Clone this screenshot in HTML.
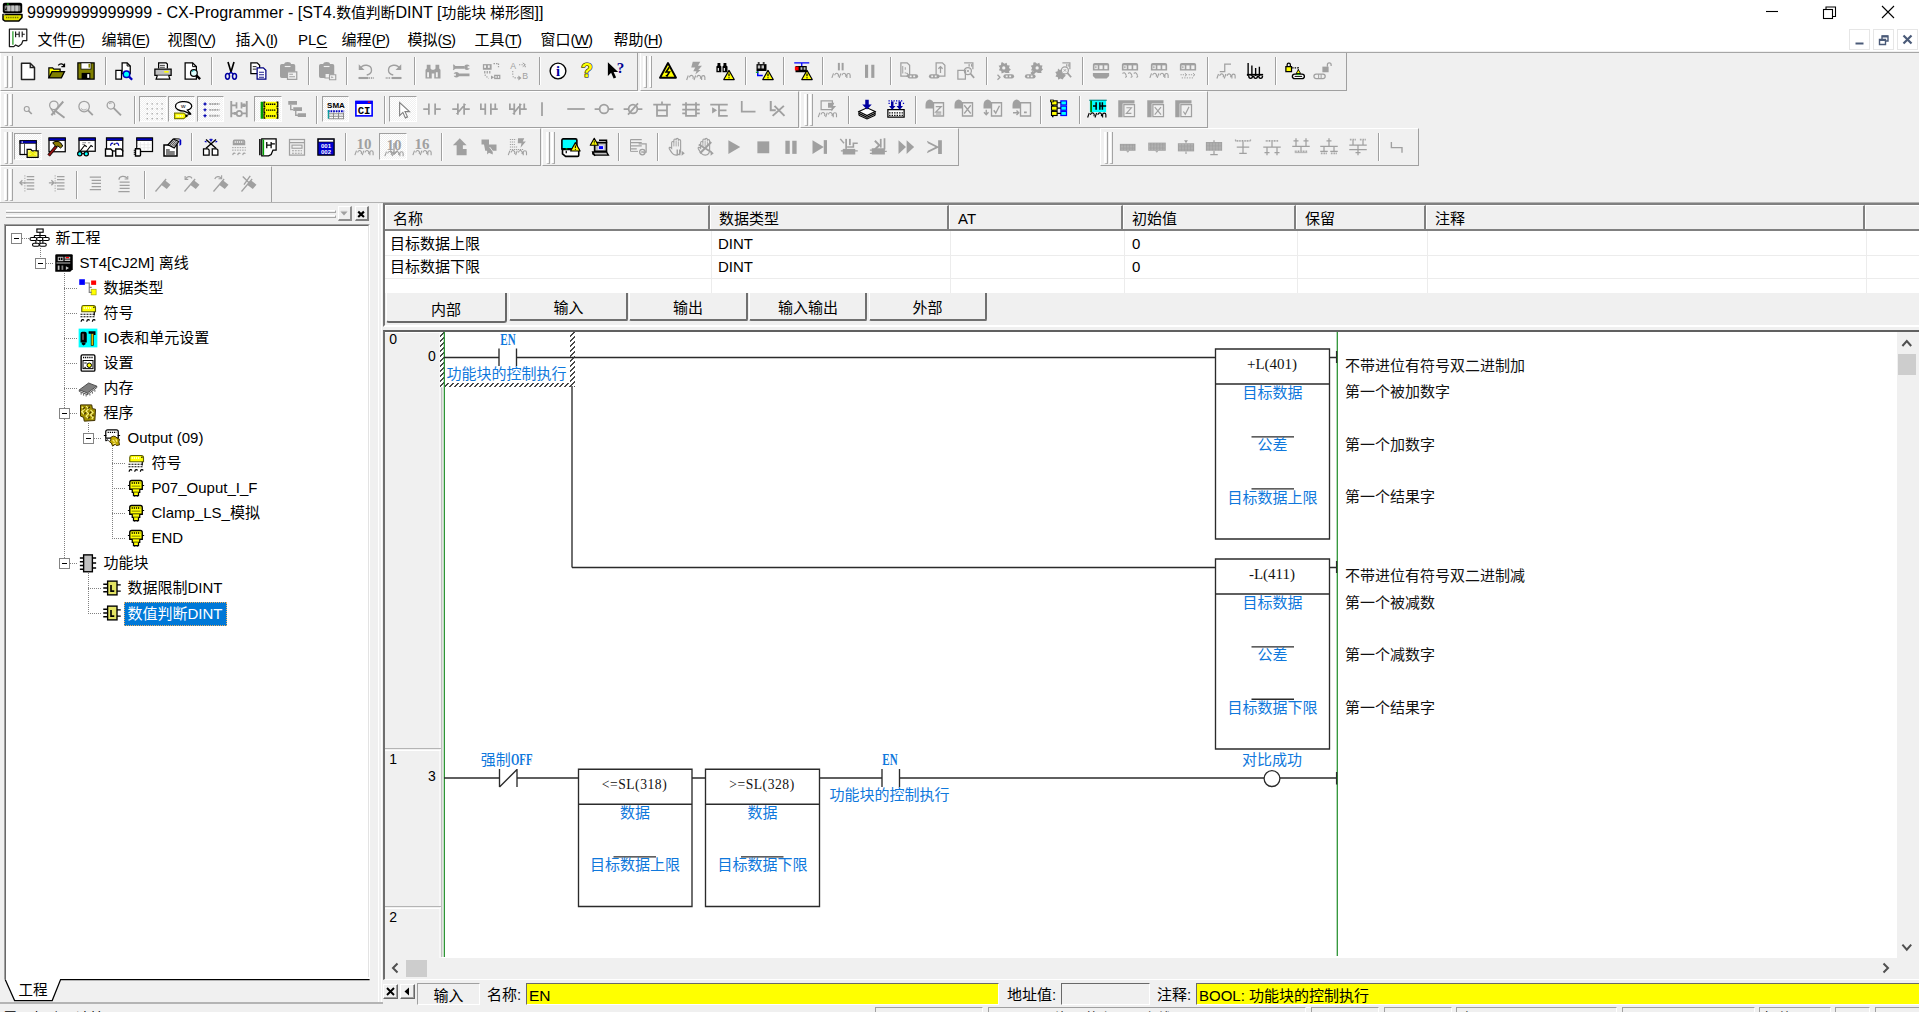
<!DOCTYPE html>
<html lang="zh-CN">
<head>
<meta charset="utf-8">
<title>CX-Programmer</title>
<style>
*{box-sizing:border-box;margin:0;padding:0}
html,body{width:1919px;height:1012px;overflow:hidden;background:#f0f0f0}
body{position:relative;font-family:"Liberation Sans","Noto Sans CJK SC",sans-serif;font-size:15px;color:#000}
div,span{position:absolute;white-space:nowrap}
svg{position:absolute;overflow:visible}
#title{left:0;top:0;width:1919px;height:27px;background:#fff}
#menu{left:0;top:27px;width:1919px;height:25px;background:#fff;border-bottom:1px solid #f0f0f0}
#menu span{top:2.6px;font-size:15px;line-height:20px}
u{text-decoration:underline;text-underline-offset:2px;text-decoration-thickness:1px}
.tb{border-right:1px solid #a0a0a0;border-bottom:1px solid #a0a0a0;border-top:1px solid #fff;border-left:1px solid #fff}
.grip{top:2.8px;width:3.8px;height:32px;border-left:2.2px solid #fff;border-right:1.6px solid #a4a4a4;border-bottom:1px solid #b0b0b0}
.sep{top:4px;width:2px;height:28px;border-left:1px solid #a0a0a0;border-right:1px solid #fff}
.chk{top:4.2px;width:27.6px;height:26.6px;background:#f8f8f8;border:1px solid #fff;border-top-color:#a0a0a0;border-left-color:#a0a0a0;
 background-image:repeating-conic-gradient(#ffffff 0% 25%,#f0f0f0 0% 50%);background-size:2px 2px}
.tree{font-size:15px;line-height:20px}
.tree span{line-height:20px}
.lad{font-family:"Liberation Mono","Noto Sans CJK SC",monospace;font-size:15px;font-weight:400}
.blue{color:#0f78dc}
.ctr{transform:translateX(-50%)}
.mono{font-family:"Liberation Serif",serif;font-size:13.5px;font-weight:400;letter-spacing:0.9px}
</style>
</head>
<body>
<div id="title">
<svg style="left:1.5px;top:1.5px" width="21" height="20" viewBox="0 0 21 20"><rect x="0.8" y="0.8" width="19.4" height="10.4" rx="2" fill="#000"/><rect x="2.6" y="3.6" width="15.8" height="5.6" rx="0.8" fill="#8a8a8a"/><rect x="5.4" y="3.6" width="2.6" height="5.6" fill="#c4c4c4"/><rect x="9.4" y="3.6" width="2.6" height="5.6" fill="#c4c4c4"/><rect x="13.4" y="3.6" width="2.6" height="5.6" fill="#c4c4c4"/><path d="M3 8l1.6 -3.4v3.4z" fill="#000"/><rect x="5.2" y="1.3" width="1.4" height="1.6" fill="#00b000"/><path d="M1 12.4h19v3.2l-3.2 3.4h-14l-1.8 -1.4z" fill="#e6e600" stroke="#000" stroke-width="1.5" stroke-linejoin="round"/><path d="M1.6 13.6l2 -1.2h-2z" fill="#fff"/><path d="M4 15.6h13" stroke="#707000" stroke-width="1.5" stroke-dasharray="1.1 0.7"/></svg>
<span style="left:27px;top:2px;font-size:16.08px;line-height:20px">99999999999999 - CX-Programmer - [ST4.<span style="position:static;font-size:14.8px">数值判断</span>DINT [<span style="position:static;font-size:14.8px">功能块 梯形图</span>]]</span>
<svg style="left:1740px;top:0" width="179" height="27" viewBox="0 0 179 27" fill="none" stroke="#000" stroke-width="1.1"><path d="M26 11.5h12"/><rect x="83.5" y="9.5" width="9" height="9"/><path d="M86 9.5v-2.5h9.5v9.5h-3"/><path d="M142 6l12 12M154 6l-12 12"/></svg>
</div>
<div id="menu">
<svg style="left:8px;top:1px" width="21" height="21" viewBox="0 0 21 21" fill="none" stroke="#1a1a1a" stroke-width="1.25"><path d="M1.4 1.2h17.4v11.4h-3.8l-1.4 3.4l-3.2 2.4l-2.8 -1.4l-1.8 1.6h-4.4z" fill="#fff" stroke-linejoin="round"/><path d="M4.9 3.2v13.6" stroke="#3aa63a" stroke-width="1.4"/><path d="M7.6 3.6v5.6M7.6 6.2h3.6M11.2 3.6v5.6M14.2 3.6v5.6M14.2 6.2h2.6" stroke-width="1.15"/></svg>
<span style="left:37.4px">文件<span style="position:static;letter-spacing:-0.75px">(<u>F</u>)</span></span>
<span style="left:101.4px">编辑<span style="position:static;letter-spacing:-0.75px">(<u>E</u>)</span></span>
<span style="left:167.4px">视图<span style="position:static;letter-spacing:-0.75px">(<u>V</u>)</span></span>
<span style="left:235.4px">插入<span style="position:static;letter-spacing:-0.75px">(<u>I</u>)</span></span>
<span style="left:298px">PL<u>C</u></span>
<span style="left:341.4px">编程<span style="position:static;letter-spacing:-0.75px">(<u>P</u>)</span></span>
<span style="left:407.4px">模拟<span style="position:static;letter-spacing:-0.75px">(<u>S</u>)</span></span>
<span style="left:474.4px">工具<span style="position:static;letter-spacing:-0.75px">(<u>T</u>)</span></span>
<span style="left:540.4px">窗口<span style="position:static;letter-spacing:-0.75px">(<u>W</u>)</span></span>
<span style="left:613.4px">帮助<span style="position:static;letter-spacing:-0.75px">(<u>H</u>)</span></span>
<svg style="left:1849px;top:2px" width="70" height="24" viewBox="0 0 70 24"><rect x="0.5" y="0.5" width="20" height="20" fill="#fff" stroke="#e6e6e6"/><rect x="24.5" y="0.5" width="20" height="20" fill="#fff" stroke="#e6e6e6"/><rect x="48.5" y="0.5" width="20" height="20" fill="#fff" stroke="#e6e6e6"/><path d="M6.5 14.5h8" stroke="#4a5a78" stroke-width="2"/><path d="M30.5 10.5h6v5h-6zM33 10v-3h6v5h-2.5" fill="none" stroke="#4a5a78" stroke-width="1.4"/><path d="M30.5 11h6M33 7.5h6" stroke="#4a5a78" stroke-width="2"/><path d="M54.5 6.5l8 8M62.5 6.5l-8 8" stroke="#4a5a78" stroke-width="2.2"/></svg>
</div>
<!-- TOOLBARS -->
<div class="tb" style="left:0.0px;top:52.0px;width:638.0px;height:38.5px">
<div class="grip" style="left:2.8px"></div><div class="grip" style="left:8px"></div>
<svg style="left:17.0px;top:7.9px" width="20" height="20" viewBox="0 0 16 16"><path d="M2.8 1.8h7l3.4 3.4v9.6h-10.4z" fill="#fff" stroke="#202020" stroke-width="1.2" stroke-linejoin="round"/><path d="M9.8 1.8v3.4h3.4" fill="none" stroke="#202020" stroke-width="1.1"/></svg>
<svg style="left:45.7px;top:7.9px" width="20" height="20" viewBox="0 0 16 16"><path d="M1.5 13.5v-8h3l1 1h5v2" fill="#ffff00" stroke="#000" stroke-width="1"/><path d="M1.5 13.5l2.5 -5h10l-2.5 5z" fill="#808000" stroke="#000" stroke-width="1"/><path d="M9 3.5c1.5 -2 4 -1.5 4.5 0.5M14 2v2.5h-2.5" fill="none" stroke="#000" stroke-width="1"/></svg>
<svg style="left:74.5px;top:7.9px" width="20" height="20" viewBox="0 0 16 16"><rect x="1.5" y="1.5" width="13" height="13" fill="#808000" stroke="#000" stroke-width="1"/><rect x="4" y="1.5" width="8" height="5" fill="#fff" stroke="#000" stroke-width="0.6"/><rect x="4.5" y="9.5" width="7" height="5" fill="#000"/><rect x="9" y="10.5" width="1.6" height="3" fill="#fff"/><rect x="10" y="2.3" width="1.3" height="3" fill="#808000"/></svg>
<div class="sep" style="left:104.1px"></div>
<svg style="left:113.2px;top:7.9px" width="20" height="20" viewBox="0 0 16 16"><path d="M1.5 7.5h4.5v7h-4.5z" fill="#fff" stroke="#000" stroke-width="1"/><path d="M6.5 1.5h4l2.5 2.5v6h-6.5z" fill="#fff" stroke="#000" stroke-width="1"/><path d="M10.5 1.5v2.5h2.5" fill="none" stroke="#000" stroke-width="0.8"/><circle cx="10" cy="10.5" r="2.6" fill="#00ffff" stroke="#0000c0" stroke-width="1.2"/><path d="M12 12.5l2.5 2.5" fill="none" stroke="#0000c0" stroke-width="1.8"/></svg>
<div class="sep" style="left:142.9px"></div>
<svg style="left:152.0px;top:7.9px" width="20" height="20" viewBox="0 0 16 16"><path d="M4.5 6v-4.5h6l1 1v3.5" fill="#fff" stroke="#000" stroke-width="1"/><path d="M1.5 6.5h13v5h-13z" fill="#c0c0c0" stroke="#000" stroke-width="1"/><path d="M3.5 11.5l-1 3h11l-1 -3" fill="#fff" stroke="#000" stroke-width="1"/><rect x="9" y="8" width="3.5" height="1.3" fill="#ffff00"/><path d="M5.5 3.5h4M5.5 5h4" fill="none" stroke="#000" stroke-width="0.6"/></svg>
<svg style="left:180.7px;top:7.9px" width="20" height="20" viewBox="0 0 16 16"><path d="M2.5 1.5h6l3 3v10h-9z" fill="#fff" stroke="#000" stroke-width="1"/><path d="M8.5 1.5v3h3" fill="none" stroke="#000" stroke-width="0.8"/><circle cx="9.5" cy="9.5" r="2.7" fill="#e0ffff" stroke="#000" stroke-width="1"/><path d="M11.5 11.5l3 3" fill="none" stroke="#000" stroke-width="1.8"/><path d="M8 8.5a2 2 0 0 1 2 -0.8" fill="none" stroke="#00a0a0" stroke-width="0.8"/></svg>
<div class="sep" style="left:210.4px"></div>
<svg style="left:219.5px;top:7.9px" width="20" height="20" viewBox="0 0 16 16"><path d="M5.6 0.8l2.6 8.6M10.4 0.8l-2.6 8.6" fill="none" stroke="#000" stroke-width="1.3"/><ellipse cx="5.2" cy="12.2" rx="1.6" ry="2.3" fill="none" stroke="#0000a0" stroke-width="1.2"/><ellipse cx="10.8" cy="12.2" rx="1.6" ry="2.3" fill="none" stroke="#0000a0" stroke-width="1.2"/><path d="M8 9l-1.8 1.4M8 9l1.8 1.4" fill="none" stroke="#0000a0" stroke-width="1.2"/></svg>
<svg style="left:248.2px;top:7.9px" width="20" height="20" viewBox="0 0 16 16"><path d="M1.5 1.5h5l2 2v6.5h-7z" fill="#fff" stroke="#000" stroke-width="1"/><path d="M3 4.5h3M3 6.5h3" fill="none" stroke="#000" stroke-width="0.7"/><path d="M6.5 5.5h5l2 2v7h-7z" fill="#fff" stroke="#000080" stroke-width="1"/><path d="M8 9h4M8 11h4M8 13h4" fill="none" stroke="#000080" stroke-width="0.7"/></svg>
<svg style="left:277.0px;top:7.9px" width="20" height="20" viewBox="0 0 16 16"><path d="M1.6 3.8a1.4 1.4 0 0 1 1.4 -1.4h9.4a1.4 1.4 0 0 1 1.4 1.4v8.4a1.4 1.4 0 0 1 -1.4 1.4h-9.4a1.4 1.4 0 0 1 -1.4 -1.4z" fill="#a0a0a0"/><path d="M5 2.4a2.6 1.6 0 0 1 5.4 0z" fill="#a0a0a0"/><path d="M5.4 4.4h4.6" fill="none" stroke="#f0f0f0" stroke-width="0.9"/><path d="M7.6 8.6h7.4v6h-7.4z" fill="#f0f0f0" stroke="#a0a0a0" stroke-width="1"/><path d="M9 10.6h3M9 12.6h4.6" fill="none" stroke="#a0a0a0" stroke-width="0.9"/></svg>
<div class="sep" style="left:306.7px"></div>
<svg style="left:315.7px;top:7.9px" width="20" height="20" viewBox="0 0 16 16"><path d="M1.6 3.8a1.4 1.4 0 0 1 1.4 -1.4h9.4a1.4 1.4 0 0 1 1.4 1.4v8.4a1.4 1.4 0 0 1 -1.4 1.4h-9.4a1.4 1.4 0 0 1 -1.4 -1.4z" fill="#a0a0a0"/><path d="M5 2.4a2.6 1.6 0 0 1 5.4 0z" fill="#a0a0a0"/><path d="M5.4 4.4h4.6" fill="none" stroke="#f0f0f0" stroke-width="0.9"/><path d="M6.4 10h4v3.6h-4z" fill="#f0f0f0" stroke="#a0a0a0" stroke-width="0.9"/><path d="M10 11h5v4h-5z" fill="#f0f0f0" stroke="#a0a0a0" stroke-width="0.9"/><path d="M11.4 12.2l2 0.8l-2 0.8z" fill="#a0a0a0"/></svg>
<div class="sep" style="left:345.4px"></div>
<svg style="left:354.5px;top:7.9px" width="20" height="20" viewBox="0 0 16 16"><path d="M3.4 6.2c2 -4.4 9 -3.4 9 1.2c0 2.2 -2 3.4 -3.8 3.8" fill="none" stroke="#a0a0a0" stroke-width="1.1"/><path d="M2.2 2.6v4.6h4.6z" fill="#a0a0a0"/><path d="M2 13.6h8" fill="none" stroke="#a0a0a0" stroke-width="1.7"/><path d="M10.6 13.6h4" fill="none" stroke="#a0a0a0" stroke-width="1.5" stroke-dasharray="0.7 0.7"/></svg>
<svg style="left:383.2px;top:7.9px" width="20" height="20" viewBox="0 0 16 16"><path d="M12.6 6.2c-2 -4.4 -9 -3.4 -9 1.2c0 2.2 2 3.4 3.8 3.8" fill="none" stroke="#a0a0a0" stroke-width="1.1"/><path d="M13.8 2.6v4.6h-4.6z" fill="#a0a0a0"/><path d="M6 13.6h8" fill="none" stroke="#a0a0a0" stroke-width="1.7"/><path d="M1.4 13.6h4" fill="none" stroke="#a0a0a0" stroke-width="1.5" stroke-dasharray="0.7 0.7"/></svg>
<div class="sep" style="left:412.9px"></div>
<svg style="left:422.0px;top:7.9px" width="20" height="20" viewBox="0 0 16 16"><path d="M3 3h3v3l1 1v7h-5v-7l1 -1zM10 3h3v3l1 1v7h-5v-7l1 -1z" fill="#a0a0a0"/><rect x="6.5" y="7" width="3" height="3" fill="#a0a0a0"/><rect x="3.3" y="9" width="1.5" height="4" fill="#f0f0f0"/><rect x="10.3" y="9" width="1.5" height="4" fill="#f0f0f0"/></svg>
<svg style="left:450.7px;top:7.9px" width="20" height="20" viewBox="0 0 16 16"><path d="M1 5h9M5 11h9" fill="none" stroke="#a0a0a0" stroke-width="2.2"/><circle cx="12" cy="5" r="2.2" fill="#a0a0a0"/><circle cx="3.5" cy="11" r="2.2" fill="#a0a0a0"/><rect x="12.5" y="4.2" width="3" height="1.6" fill="#f0f0f0"/><rect x="0.5" y="10.2" width="2.6" height="1.6" fill="#f0f0f0"/><path d="M1 3l2 2l-2 2" fill="none" stroke="#a0a0a0" stroke-width="1"/></svg>
<svg style="left:479.5px;top:7.9px" width="20" height="20" viewBox="0 0 16 16"><path d="M1.5 2.5h7v4.5h-7z" fill="#a0a0a0"/><path d="M3 8v2M5 8v2M7 8v2" fill="none" stroke="#a0a0a0" stroke-width="1"/><rect x="2.5" y="3.5" width="1.5" height="2" fill="#f0f0f0"/><rect x="5.5" y="3.5" width="1.5" height="2" fill="#f0f0f0"/><path d="M10 2h4v3" fill="none" stroke="#a0a0a0" stroke-width="1" stroke-dasharray="1.2 0.8"/><path d="M3 11l3 3" fill="none" stroke="#a0a0a0" stroke-width="1" stroke-dasharray="1 1"/><path d="M8 11.5l2.5 1.5l-2.5 1.5z" fill="#a0a0a0"/><rect x="10.5" y="11" width="5" height="3.5" fill="#a0a0a0"/><rect x="11.5" y="12" width="1" height="1.5" fill="#f0f0f0"/><rect x="13.5" y="12" width="1" height="1.5" fill="#f0f0f0"/></svg>
<svg style="left:508.2px;top:7.9px" width="20" height="20" viewBox="0 0 16 16"><text x="1" y="6.5" font-size="7" fill="#a0a0a0" font-weight="normal" font-family="Liberation Sans,sans-serif" text-anchor="start">A</text><text x="10.5" y="14.5" font-size="7" fill="#a0a0a0" font-weight="normal" font-family="Liberation Sans,sans-serif" text-anchor="start">B</text><path d="M3 8v3c0 2 1 2.5 3 2.5h2" fill="none" stroke="#a0a0a0" stroke-width="0.9" stroke-dasharray="1 1"/><path d="M7.5 11.5l2.5 2l-2.5 2z" fill="#a0a0a0"/><path d="M8 3h5v3" fill="none" stroke="#a0a0a0" stroke-width="0.9" stroke-dasharray="1 1"/><path d="M11 1.5l2 1.5l-2 1.5" fill="none" stroke="#a0a0a0" stroke-width="0.8"/></svg>
<div class="sep" style="left:537.9px"></div>
<svg style="left:547.0px;top:7.9px" width="20" height="20" viewBox="0 0 16 16"><circle cx="8" cy="8" r="6.3" fill="#fff" stroke="#000" stroke-width="1.1"/><text x="8" y="12.2" font-size="11.5" fill="#0000a0" font-weight="bold" font-family="Liberation Serif,sans-serif" text-anchor="middle">i</text></svg>
<svg style="left:575.7px;top:7.9px" width="20" height="20" viewBox="0 0 16 16"><text x="8" y="12.6" font-size="15.5" fill="#ffff00" font-weight="bold" font-family="Liberation Sans,sans-serif" text-anchor="middle" stroke="#000" stroke-width="0.9" paint-order="stroke">?</text></svg>
<svg style="left:604.5px;top:7.9px" width="20" height="20" viewBox="0 0 16 16"><path d="M1.5 1l0 11l2.6 -2.6l2 4.6l2 -0.9l-2 -4.4h3.6z" fill="#000"/><text x="11.5" y="9.5" font-size="12" fill="#000090" font-weight="bold" font-family="Liberation Serif,sans-serif" text-anchor="middle">?</text></svg>
</div>
<div class="tb" style="left:639.5px;top:52.0px;width:707.0px;height:38.5px">
<div class="grip" style="left:2.8px"></div><div class="grip" style="left:8px"></div>
<svg style="left:17.0px;top:7.9px" width="20" height="20" viewBox="0 0 16 16"><path d="M8 1.6l6.4 11.8h-12.8z" fill="#ffff00" stroke="#000" stroke-width="1.5" stroke-linejoin="round"/><path d="M9 5l-2.6 3.8h2.8l-2.2 3.4" fill="none" stroke="#000" stroke-width="1.2"/><path d="M5.8 11.6l1.6 1.2l0.4 -2z" fill="#000"/></svg>
<svg style="left:45.7px;top:7.9px" width="20" height="20" viewBox="0 0 16 16"><path d="M5.4 0.6h6l-1.8 3.2h3.2l-3 3.4h2l-4.4 3.6l1 -2.6h-2.6l1.6 -3h-3.2z" fill="#a0a0a0"/><path d="M0.5 15.2l1.3 -3.6M2.8 13.1a1.5 1.6 0 1 1 2.6 1.1M6.4 15.2l1.3 -3.6M8.7 13.1a1.5 1.6 0 1 1 2.6 1.1M12.5 15.2v-2.2a1.3 1.3 0 0 1 2.6 0v2.2" fill="none" stroke="#a0a0a0" stroke-width="0.9"/></svg>
<svg style="left:74.5px;top:7.9px" width="20" height="20" viewBox="0 0 16 16"><path d="M2 1.5h2.3v2l0.8 0.8v4.7h-4v-4.7l0.9 -0.8zM6.8 1.5h2.3v2l0.9 0.8v4.7h-4v-4.7l0.8 -0.8z" fill="#000"/><rect x="2.2" y="5.6" width="0.9" height="2.3" fill="#fff"/><rect x="7" y="5.6" width="0.9" height="2.3" fill="#fff"/><path d="M11.2 7.5L15.4 14.850000000000001L7 14.850000000000001Z" fill="#ffff00" stroke="#000" stroke-width="0.9" stroke-linejoin="round"/><path d="M11.2 10.0725v2.205" fill="none" stroke="#000" stroke-width="0.9450000000000001"/><rect x="10.7275" y="13.0125" width="0.9450000000000001" height="0.8400000000000001" fill="#000"/></svg>
<div class="sep" style="left:104.1px"></div>
<svg style="left:113.2px;top:7.9px" width="20" height="20" viewBox="0 0 16 16"><rect x="2" y="2.5" width="8" height="5.5" fill="#000"/><rect x="3" y="3.5" width="2" height="2.5" fill="#c0c0c0"/><rect x="6" y="3.5" width="2" height="2.5" fill="#c0c0c0"/><path d="M3 1.5h1.5M7 1.5h1.5" fill="none" stroke="#000" stroke-width="1.2"/><path d="M3 8v3.5h4" fill="none" stroke="#0000ff" stroke-width="1.2"/><path d="M1.5 9h2" fill="none" stroke="#00a000" stroke-width="1"/><path d="M11.2 7.5L15.4 14.850000000000001L7 14.850000000000001Z" fill="#ffff00" stroke="#000" stroke-width="0.9" stroke-linejoin="round"/><path d="M11.2 10.0725v2.205" fill="none" stroke="#000" stroke-width="0.9450000000000001"/><rect x="10.7275" y="13.0125" width="0.9450000000000001" height="0.8400000000000001" fill="#000"/></svg>
<div class="sep" style="left:142.9px"></div>
<svg style="left:152.0px;top:7.9px" width="20" height="20" viewBox="0 0 16 16"><path d="M1 1.5h12" fill="none" stroke="#0000ff" stroke-width="1"/><rect x="2" y="4" width="9" height="5" fill="#000"/><rect x="1.5" y="4.5" width="3" height="3" fill="#ff0000"/><rect x="6" y="5" width="1.5" height="2" fill="#c0c0c0"/><rect x="8.5" y="5" width="1.5" height="2" fill="#c0c0c0"/><path d="M7 1.5v2.5" fill="none" stroke="#0000ff" stroke-width="1"/><path d="M11.2 7.5L15.4 14.850000000000001L7 14.850000000000001Z" fill="#ffff00" stroke="#000" stroke-width="0.9" stroke-linejoin="round"/><path d="M11.2 10.0725v2.205" fill="none" stroke="#000" stroke-width="0.9450000000000001"/><rect x="10.7275" y="13.0125" width="0.9450000000000001" height="0.8400000000000001" fill="#000"/></svg>
<div class="sep" style="left:181.7px"></div>
<svg style="left:190.7px;top:7.9px" width="20" height="20" viewBox="0 0 16 16"><rect x="5.5" y="1.5" width="1.6" height="6" fill="#a0a0a0"/><rect x="8.5" y="1.5" width="1.6" height="6" fill="#a0a0a0"/><path d="M0.7000000000000002 13.5l1.3 -3.6M3.0 11.4a1.5 1.6 0 1 1 2.6 1.1M6.6000000000000005 13.5l1.3 -3.6M8.899999999999999 11.4a1.5 1.6 0 1 1 2.6 1.1M12.7 13.5v-2.2a1.3 1.3 0 0 1 2.6 0v2.2" fill="none" stroke="#a0a0a0" stroke-width="0.9"/></svg>
<svg style="left:219.5px;top:7.9px" width="20" height="20" viewBox="0 0 16 16"><rect x="4" y="3" width="2.5" height="10.5" fill="#a0a0a0"/><rect x="9" y="3" width="2.5" height="10.5" fill="#a0a0a0"/></svg>
<div class="sep" style="left:249.2px"></div>
<svg style="left:258.2px;top:7.9px" width="20" height="20" viewBox="0 0 16 16"><path d="M1.5 1.5h5l2 2v8.5h-7z" fill="none" stroke="#a0a0a0" stroke-width="1"/><path d="M3 4v6M5 5v2M5 9v1" fill="none" stroke="#a0a0a0" stroke-width="0.8"/><path d="M6 9.5l1.5 1.5l-1.5 1.5" fill="none" stroke="#a0a0a0" stroke-width="1"/><path d="M8.5 10.5h5a1.7 1.7 0 0 1 0 3.5h-5a1.7 1.7 0 0 1 0 -3.5z" fill="#a0a0a0"/><rect x="8.6" y="11.6" width="1.5" height="1.4" fill="#f0f0f0"/><rect x="11.4" y="11.6" width="1.5" height="1.4" fill="#f0f0f0"/></svg>
<svg style="left:287.0px;top:7.9px" width="20" height="20" viewBox="0 0 16 16"><path d="M6.5 1.5h5l2 2v8.5h-7z" fill="none" stroke="#a0a0a0" stroke-width="1"/><path d="M10 9.5v-5M8.3 6.2l1.7 -1.7l1.7 1.7" fill="none" stroke="#a0a0a0" stroke-width="1"/><path d="M2.5 10.5h5a1.7 1.7 0 0 1 0 3.5h-5a1.7 1.7 0 0 1 0 -3.5z" fill="#a0a0a0"/><rect x="2.6" y="11.6" width="1.5" height="1.4" fill="#f0f0f0"/><rect x="5.4" y="11.6" width="1.5" height="1.4" fill="#f0f0f0"/></svg>
<svg style="left:315.7px;top:7.9px" width="20" height="20" viewBox="0 0 16 16"><path d="M1.5 7.5h6v7h-6z" fill="none" stroke="#a0a0a0" stroke-width="1"/><path d="M6.5 1.5h7v5" fill="none" stroke="#a0a0a0" stroke-width="1"/><rect x="10" y="2.5" width="1" height="2" fill="#a0a0a0"/><rect x="12" y="2.5" width="1" height="2" fill="#a0a0a0"/><circle cx="9.5" cy="8" r="2.8" fill="none" stroke="#a0a0a0" stroke-width="1"/><path d="M11.5 10l3 3.5" fill="none" stroke="#a0a0a0" stroke-width="1.4"/><path d="M8.5 7l2 2M10.5 7l-2 2" fill="none" stroke="#a0a0a0" stroke-width="0.7"/></svg>
<div class="sep" style="left:345.4px"></div>
<svg style="left:354.5px;top:7.9px" width="20" height="20" viewBox="0 0 16 16"><path d="M6 1l1.5 1.2l1.8 -0.8l0.5 1.9l2 0.3l-0.6 1.9l1.5 1.3l-1.5 1.3l0.4 1.4h-3l-1 -0.5l-2.3 0.9l-0.3 -2l-1.9 -0.6l0.9 -1.8l-1.1 -1.7l1.9 -0.7l0.2 -2z" fill="#a0a0a0"/><circle cx="7" cy="5.5" r="1.3" fill="#f0f0f0"/><path d="M2 11l2 2l-2 2" fill="none" stroke="#a0a0a0" stroke-width="1"/><path d="M8.5 10.5h5a1.7 1.7 0 0 1 0 3.5h-5a1.7 1.7 0 0 1 0 -3.5z" fill="#a0a0a0"/><rect x="8.6" y="11.6" width="1.5" height="1.4" fill="#f0f0f0"/><rect x="11.4" y="11.6" width="1.5" height="1.4" fill="#f0f0f0"/></svg>
<svg style="left:383.2px;top:7.9px" width="20" height="20" viewBox="0 0 16 16"><path d="M9 1l1.5 1.2l1.8 -0.8l0.5 1.9l2 0.3l-0.6 1.9l1 1.3l-1.5 1.3l0.4 1.4h-3l-1 -0.5l-2.3 0.9l-0.3 -2l-1.9 -0.6l0.9 -1.8l-1.1 -1.7l1.9 -0.7l0.2 -2z" fill="#a0a0a0"/><circle cx="10.5" cy="5.5" r="1.3" fill="#f0f0f0"/><path d="M7 12v-3.5M5.5 10l1.5 -1.5l1.5 1.5" fill="none" stroke="#a0a0a0" stroke-width="1"/><path d="M2.5 10.5h5a1.7 1.7 0 0 1 0 3.5h-5a1.7 1.7 0 0 1 0 -3.5z" fill="#a0a0a0"/><rect x="2.6" y="11.6" width="1.5" height="1.4" fill="#f0f0f0"/><rect x="5.4" y="11.6" width="1.5" height="1.4" fill="#f0f0f0"/></svg>
<svg style="left:412.0px;top:7.9px" width="20" height="20" viewBox="0 0 16 16"><path d="M4 6l1.5 1.2l1.8 -0.8l0.5 1.9l2 0.3l-0.6 1.9l1 1.3l-1.5 1.3l-1 1.6l-1.8 -0.7l-1.7 0.9l-0.3 -2l-1.9 -0.6l0.9 -1.8l-1.1 -1.7l1.9 -0.7z" fill="#a0a0a0"/><path d="M7.5 1.5h6v5" fill="none" stroke="#a0a0a0" stroke-width="1"/><rect x="10.5" y="2.5" width="1" height="2" fill="#a0a0a0"/><rect x="12.2" y="2.5" width="1" height="2" fill="#a0a0a0"/><circle cx="9.5" cy="7.5" r="2.8" fill="#f0f0f0" stroke="#a0a0a0" stroke-width="1"/><path d="M11.5 9.5l3 3.5" fill="none" stroke="#a0a0a0" stroke-width="1.4"/><path d="M8.5 6.5l2 2M10.5 6.5l-2 2" fill="none" stroke="#a0a0a0" stroke-width="0.7"/></svg>
<div class="sep" style="left:441.7px"></div>
<svg style="left:450.7px;top:7.9px" width="20" height="20" viewBox="0 0 16 16"><path d="M1.5 3a1.5 1.5 0 0 1 1.5 -1.5h10a1.5 1.5 0 0 1 1.5 1.5v4.5h-13z" fill="#a0a0a0"/><rect x="2.8" y="3.5" width="2.6" height="3" fill="#f0f0f0"/><rect x="6.7" y="3.5" width="2.6" height="3" fill="#f0f0f0"/><rect x="10.6" y="3.5" width="2.6" height="3" fill="#f0f0f0"/><rect x="3.4" y="4.2" width="1" height="1.6" fill="#a0a0a0"/><path d="M1.5 9.5h13v2.5l-2 2h-9l-2 -2z" fill="#a0a0a0"/></svg>
<svg style="left:479.5px;top:7.9px" width="20" height="20" viewBox="0 0 16 16"><path d="M1.5 3a1.5 1.5 0 0 1 1.5 -1.5h10a1.5 1.5 0 0 1 1.5 1.5v4.5h-13z" fill="#a0a0a0"/><rect x="2.8" y="3.5" width="2.6" height="3" fill="#f0f0f0"/><rect x="6.7" y="3.5" width="2.6" height="3" fill="#f0f0f0"/><rect x="10.6" y="3.5" width="2.6" height="3" fill="#f0f0f0"/><rect x="3.4" y="4.2" width="1" height="1.6" fill="#a0a0a0"/><path d="M2 10c1 -1 2 -1 3 1.5M6.5 10c1 -1 2 -1 3 1.5M11 10c1 -1 2 -1 3 1.5" fill="none" stroke="#a0a0a0" stroke-width="0.9"/><path d="M4 13l1.2 -0.2l-0.3 -1.3M8.5 13l1.2 -0.2l-0.3 -1.3M13 13l1.2 -0.2l-0.3 -1.3" fill="none" stroke="#a0a0a0" stroke-width="0.8"/></svg>
<svg style="left:508.2px;top:7.9px" width="20" height="20" viewBox="0 0 16 16"><path d="M1.5 3a1.5 1.5 0 0 1 1.5 -1.5h10a1.5 1.5 0 0 1 1.5 1.5v4.5h-13z" fill="#a0a0a0"/><rect x="2.8" y="3.5" width="2.6" height="3" fill="#f0f0f0"/><rect x="6.7" y="3.5" width="2.6" height="3" fill="#f0f0f0"/><rect x="10.6" y="3.5" width="2.6" height="3" fill="#f0f0f0"/><rect x="3.4" y="4.2" width="1" height="1.6" fill="#a0a0a0"/><path d="M0.7000000000000002 13.5l1.3 -3.6M3.0 11.4a1.5 1.6 0 1 1 2.6 1.1M6.6000000000000005 13.5l1.3 -3.6M8.899999999999999 11.4a1.5 1.6 0 1 1 2.6 1.1M12.7 13.5v-2.2a1.3 1.3 0 0 1 2.6 0v2.2" fill="none" stroke="#a0a0a0" stroke-width="0.9"/></svg>
<svg style="left:537.0px;top:7.9px" width="20" height="20" viewBox="0 0 16 16"><path d="M1.5 3a1.5 1.5 0 0 1 1.5 -1.5h10a1.5 1.5 0 0 1 1.5 1.5v4.5h-13z" fill="#a0a0a0"/><rect x="2.8" y="3.5" width="2.6" height="3" fill="#f0f0f0"/><rect x="6.7" y="3.5" width="2.6" height="3" fill="#f0f0f0"/><rect x="10.6" y="3.5" width="2.6" height="3" fill="#f0f0f0"/><rect x="3.4" y="4.2" width="1" height="1.6" fill="#a0a0a0"/><path d="M2 11h4M8.5 11h3" fill="none" stroke="#a0a0a0" stroke-width="0.9" stroke-dasharray="1 0.8"/><path d="M5.5 9.8l1.5 1.2l-1.5 1.2M12 9.8l1.5 1.2l-1.5 1.2" fill="none" stroke="#a0a0a0" stroke-width="0.8"/><path d="M3 13.5h9" fill="none" stroke="#a0a0a0" stroke-width="0.8" stroke-dasharray="1 1"/></svg>
<div class="sep" style="left:566.6px"></div>
<svg style="left:575.7px;top:7.9px" width="20" height="20" viewBox="0 0 16 16"><path d="M3 8.5h4v-6h5" fill="none" stroke="#a0a0a0" stroke-width="1"/><path d="M0.7000000000000002 14l1.3 -3.6M3.0 11.9a1.5 1.6 0 1 1 2.6 1.1M6.6000000000000005 14l1.3 -3.6M8.899999999999999 11.9a1.5 1.6 0 1 1 2.6 1.1M12.7 14v-2.2a1.3 1.3 0 0 1 2.6 0v2.2" fill="none" stroke="#a0a0a0" stroke-width="0.9"/></svg>
<svg style="left:604.5px;top:7.9px" width="20" height="20" viewBox="0 0 16 16"><path d="M2.5 1.5v10.5M5.5 3.5v8.5M8.5 5.5v6.5M11.5 4.5v7.5" fill="none" stroke="#000" stroke-width="1.1"/><path d="M1.5 11h13" fill="none" stroke="#000" stroke-width="1.4"/><path d="M3 12c0 2.5 3 2.5 3 0M7 12c0 2.5 3 2.5 3 0M11 12c0 2.5 3 2.5 3 0" fill="none" stroke="#000" stroke-width="1.1"/></svg>
<div class="sep" style="left:634.1px"></div>
<svg style="left:643.2px;top:7.9px" width="20" height="20" viewBox="0 0 16 16"><rect x="1.5" y="4.5" width="4.5" height="4" fill="#ffff00" stroke="#000" stroke-width="1"/><path d="M2.5 4.5v-1.5a1.3 1.3 0 0 1 2.6 0v1.5" fill="none" stroke="#000" stroke-width="1"/><path d="M6.5 5.5h5v3" fill="none" stroke="#000" stroke-width="1" stroke-dasharray="1.2 0.8"/><path d="M11.5 7l1.8 3h-3.6z" fill="#ffff00" stroke="#000" stroke-width="0.7"/><path d="M8.5 10.5h6a1.8 1.8 0 0 1 0 3.6h-6a1.8 1.8 0 0 1 0 -3.6z" fill="#fff" stroke="#000" stroke-width="1.1"/><path d="M8.5 12.3h6" fill="none" stroke="#000" stroke-width="0.8"/><rect x="10.7" y="10.3" width="1.6" height="1" fill="#00c000"/></svg>
<svg style="left:672.0px;top:7.9px" width="20" height="20" viewBox="0 0 16 16"><rect x="7.5" y="4.5" width="5" height="4.5" fill="#a0a0a0"/><path d="M11.5 4.5v-1.5a1.5 1.5 0 0 1 3 0v1" fill="none" stroke="#a0a0a0" stroke-width="1"/><path d="M2.5 10.5h5.5a1.7 1.7 0 0 1 0 3.5h-5.5a1.7 1.7 0 0 1 0 -3.5z" fill="none" stroke="#a0a0a0" stroke-width="1"/><path d="M4.5 10.5v3.5M6.5 10.5v3.5" fill="none" stroke="#a0a0a0" stroke-width="0.8"/></svg>
</div>
<div class="tb" style="left:0.0px;top:90.5px;width:798.5px;height:37.5px">
<div class="grip" style="left:2.8px"></div><div class="grip" style="left:8px"></div>
<svg style="left:17.0px;top:7.9px" width="20" height="20" viewBox="0 0 16 16"><circle cx="7" cy="8" r="2" fill="none" stroke="#a0a0a0" stroke-width="0.9"/><path d="M8.4 9.4l2.6 2.6" fill="none" stroke="#a0a0a0" stroke-width="1.4"/></svg>
<svg style="left:45.7px;top:7.9px" width="20" height="20" viewBox="0 0 16 16"><circle cx="5.5" cy="5" r="3.4" fill="none" stroke="#a0a0a0" stroke-width="1"/><path d="M7.88 7.38l0 0" fill="none" stroke="#a0a0a0" stroke-width="1.5"/><path d="M13 2l-9.5 11M6 9l8 6" fill="none" stroke="#a0a0a0" stroke-width="1.6"/><path d="M3 7.5l3.5 5" fill="none" stroke="#a0a0a0" stroke-width="1.1"/></svg>
<svg style="left:74.5px;top:7.9px" width="20" height="20" viewBox="0 0 16 16"><circle cx="6.5" cy="6" r="4.2" fill="none" stroke="#a0a0a0" stroke-width="1"/><path d="M9.44 8.94l4 4" fill="none" stroke="#a0a0a0" stroke-width="1.5"/><path d="M4 7.5a3 3 0 0 0 4.5 0.5" fill="none" stroke="#a0a0a0" stroke-width="0.7"/></svg>
<svg style="left:103.2px;top:7.9px" width="20" height="20" viewBox="0 0 16 16"><circle cx="5.5" cy="5" r="3" fill="none" stroke="#a0a0a0" stroke-width="1"/><path d="M7.6 7.1l6 6" fill="none" stroke="#a0a0a0" stroke-width="1.5"/><path d="M4 4a1.6 1.6 0 0 1 2 -0.6" fill="none" stroke="#a0a0a0" stroke-width="0.7"/></svg>
<div class="sep" style="left:132.9px"></div>
<div class="chk" style="left:138.2px"></div>
<svg style="left:142.8px;top:8.7px" width="20" height="20" viewBox="0 0 16 16"><rect x="2.1" y="2.6" width="1.0" height="1.0" fill="#9a9a9a"/><rect x="2.1" y="6.550000000000001" width="1.0" height="1.0" fill="#9a9a9a"/><rect x="2.1" y="10.5" width="1.0" height="1.0" fill="#9a9a9a"/><rect x="2.1" y="14.450000000000001" width="1.0" height="1.0" fill="#9a9a9a"/><rect x="6.050000000000001" y="2.6" width="1.0" height="1.0" fill="#9a9a9a"/><rect x="6.050000000000001" y="6.550000000000001" width="1.0" height="1.0" fill="#9a9a9a"/><rect x="6.050000000000001" y="10.5" width="1.0" height="1.0" fill="#9a9a9a"/><rect x="6.050000000000001" y="14.450000000000001" width="1.0" height="1.0" fill="#9a9a9a"/><rect x="10.0" y="2.6" width="1.0" height="1.0" fill="#9a9a9a"/><rect x="10.0" y="6.550000000000001" width="1.0" height="1.0" fill="#9a9a9a"/><rect x="10.0" y="10.5" width="1.0" height="1.0" fill="#9a9a9a"/><rect x="10.0" y="14.450000000000001" width="1.0" height="1.0" fill="#9a9a9a"/><rect x="13.950000000000001" y="2.6" width="1.0" height="1.0" fill="#9a9a9a"/><rect x="13.950000000000001" y="6.550000000000001" width="1.0" height="1.0" fill="#9a9a9a"/><rect x="13.950000000000001" y="10.5" width="1.0" height="1.0" fill="#9a9a9a"/><rect x="13.950000000000001" y="14.450000000000001" width="1.0" height="1.0" fill="#9a9a9a"/></svg>
<div class="chk" style="left:166.9px"></div>
<svg style="left:171.5px;top:8.7px" width="20" height="20" viewBox="0 0 16 16"><path d="M2 5a6.5 3.6 0 1 1 9.5 3.1l3 3.4l-5.6 -2.6a7 3.6 0 0 1 -6.9 -3.9z" fill="#fff" stroke="#000" stroke-width="1"/><text x="8.3" y="6.6" font-size="5" fill="#000" font-weight="normal" font-family="Liberation Sans,sans-serif" text-anchor="middle">w</text><path d="M1.3 10.5h7.2l2.8 2.2l-2.8 2.2h-7.2z" fill="#ffff00" stroke="#808000" stroke-width="1"/><path d="M2.8 12.7h5" fill="none" stroke="#fff" stroke-width="1.2" stroke-dasharray="0.9 0.5"/><circle cx="10.6" cy="12.7" r="0.9" fill="#000"/><path d="M11 12.2c1.8 -0.2 2.6 -1 2.8 -2" fill="none" stroke="#000" stroke-width="0.9"/></svg>
<div class="chk" style="left:195.7px"></div>
<svg style="left:200.3px;top:8.7px" width="20" height="20" viewBox="0 0 16 16"><path d="M3.2 1.4l0.55 1.2l1.2 0.55l-1.2 0.55l-0.55 1.2l-0.55 -1.2l-1.2 -0.55l1.2 -0.55z" fill="#0000b0"/><path d="M3.2 6.1l0.55 1.2l1.2 0.55l-1.2 0.55l-0.55 1.2l-0.55 -1.2l-1.2 -0.55l1.2 -0.55z" fill="#0000b0"/><path d="M3.2 10.8l0.55 1.2l1.2 0.55l-1.2 0.55l-0.55 1.2l-0.55 -1.2l-1.2 -0.55l1.2 -0.55z" fill="#0000b0"/><path d="M6.6 3.2h8.2" fill="none" stroke="#a8a8a8" stroke-width="1.5" stroke-dasharray="1.5 0.45"/><path d="M6.6 7.9h8.2" fill="none" stroke="#a8a8a8" stroke-width="1.5" stroke-dasharray="1.5 0.45"/><path d="M6.6 12.600000000000001h8.2" fill="none" stroke="#a8a8a8" stroke-width="1.5" stroke-dasharray="1.5 0.45"/></svg>
<svg style="left:228.2px;top:7.9px" width="20" height="20" viewBox="0 0 16 16"><path d="M1.8 1.5v13M14.2 1.5v13" fill="none" stroke="#a0a0a0" stroke-width="1.5"/><path d="M1.8 5h4.2M10 5h4.2M6 2.5v5M10 2.5v5" fill="none" stroke="#a0a0a0" stroke-width="1.4"/><rect x="10.6" y="3.6" width="2.6" height="2.8" fill="#a0a0a0"/><path d="M1.8 11.5h4M10.5 11.5h3.7" fill="none" stroke="#a0a0a0" stroke-width="1.4"/><rect x="3.8" y="10.4" width="2.2" height="2.2" fill="#a0a0a0"/><circle cx="8.2" cy="11.5" r="2.1" fill="none" stroke="#a0a0a0" stroke-width="1.4"/></svg>
<div class="chk" style="left:253.2px"></div>
<svg style="left:257.8px;top:8.7px" width="20" height="20" viewBox="0 0 16 16"><rect x="1.3" y="1.4" width="1.9" height="13.6" fill="#00a000"/><rect x="3.6" y="1.4" width="11.8" height="13.6" fill="#ffff00"/><path d="M5.6 3.4h7.8" fill="none" stroke="#000" stroke-width="1.1" stroke-dasharray="1.1 0.5"/><path d="M5.6 8.1h7.8" fill="none" stroke="#000" stroke-width="1.1" stroke-dasharray="1.1 0.5"/><path d="M5.6 12.8h7.8" fill="none" stroke="#000" stroke-width="1.1" stroke-dasharray="1.1 0.5"/><path d="M5 1.7h-1v3.4h1M14 1.7h1v3.4h-1" fill="none" stroke="#000" stroke-width="1"/><path d="M5 6.4h-1v3.4h1M14 6.4h1v3.4h-1" fill="none" stroke="#000" stroke-width="1"/><path d="M5 11.1h-1v3.4h1M14 11.1h1v3.4h-1" fill="none" stroke="#000" stroke-width="1"/></svg>
<svg style="left:285.7px;top:7.9px" width="20" height="20" viewBox="0 0 16 16"><rect x="1" y="1.6" width="7" height="3" fill="#a0a0a0"/><rect x="5" y="6.6" width="7" height="3" fill="#a0a0a0"/><rect x="8.6" y="11.4" width="6.6" height="3" fill="#a0a0a0"/><path d="M3 4.5v4h2M7 9.5v3.5h2" fill="none" stroke="#a0a0a0" stroke-width="1.1"/></svg>
<div class="sep" style="left:315.4px"></div>
<div class="chk" style="left:320.7px"></div>
<svg style="left:325.3px;top:8.7px" width="20" height="20" viewBox="0 0 16 16"><text x="8" y="6.6" font-size="6.4" fill="#000" font-weight="bold" font-family="Liberation Sans,sans-serif" text-anchor="middle">SMA</text><path d="M1.5 9h13" fill="none" stroke="#0000c0" stroke-width="1.6" stroke-dasharray="1.4 0.7"/><path d="M2 8v7" fill="none" stroke="#00a0a0" stroke-width="1.2"/><path d="M2 11h12.5M2 13h12.5M2 15h12.5M6 10v5M10 10v5M14 10v5" fill="none" stroke="#808080" stroke-width="0.7"/></svg>
<svg style="left:353.2px;top:7.9px" width="20" height="20" viewBox="0 0 16 16"><rect x="1.5" y="2" width="13" height="11.5" fill="#fff" stroke="#0000ff" stroke-width="1.3"/><rect x="1.5" y="1.5" width="13" height="2.5" fill="#0000ff"/><rect x="11" y="2" width="2" height="1" fill="#ff0000"/><text x="8" y="11.6" font-size="8.5" fill="#000" font-weight="bold" font-family="Liberation Mono,sans-serif" text-anchor="middle">CI</text></svg>
<div class="sep" style="left:382.9px"></div>
<div class="chk" style="left:388.2px"></div>
<svg style="left:392.8px;top:8.7px" width="20" height="20" viewBox="0 0 16 16"><path d="M4.5 2v10.5l2.6 -2.6l2 4.4l1.7 -0.8l-2 -4.2h3.6z" fill="#fff" stroke="#808080" stroke-width="0.9"/></svg>
<svg style="left:420.7px;top:7.9px" width="20" height="20" viewBox="0 0 16 16"><path d="M1 8h4.5M10.5 8h4.5M5.5 3.5v9M10.5 3.5v9" fill="none" stroke="#a0a0a0" stroke-width="1.4"/></svg>
<svg style="left:449.5px;top:7.9px" width="20" height="20" viewBox="0 0 16 16"><path d="M1 8h4.5M10.5 8h4.5M5.5 3.5v9M10.5 3.5v9M4.5 12l7 -8" fill="none" stroke="#a0a0a0" stroke-width="1.4"/></svg>
<svg style="left:478.2px;top:7.9px" width="20" height="20" viewBox="0 0 16 16"><path d="M1.5 3.5v4.5h3.5M5 3.5v9M9.5 3.5v9M9.5 8h3.5v-4.5M13 8h2" fill="none" stroke="#a0a0a0" stroke-width="1.4"/></svg>
<svg style="left:507.0px;top:7.9px" width="20" height="20" viewBox="0 0 16 16"><path d="M1.5 3.5v4.5h3.5M5 3.5v9M9.5 3.5v9M9.5 8h3.5v-4.5M13 8h2M4 12l6.5 -8" fill="none" stroke="#a0a0a0" stroke-width="1.4"/></svg>
<svg style="left:535.7px;top:7.9px" width="20" height="20" viewBox="0 0 16 16"><path d="M4 2.5v11" fill="none" stroke="#a0a0a0" stroke-width="1.4"/></svg>
<svg style="left:564.5px;top:7.9px" width="20" height="20" viewBox="0 0 16 16"><path d="M1 8h14" fill="none" stroke="#a0a0a0" stroke-width="1.4"/></svg>
<svg style="left:593.2px;top:7.9px" width="20" height="20" viewBox="0 0 16 16"><path d="M0.5 8h4M11.5 8h4" fill="none" stroke="#a0a0a0" stroke-width="1.4"/><circle cx="8" cy="8" r="3.5" fill="none" stroke="#a0a0a0" stroke-width="1.4"/></svg>
<svg style="left:622.0px;top:7.9px" width="20" height="20" viewBox="0 0 16 16"><path d="M0.5 8h4M11.5 8h4M4 12.5l8 -9" fill="none" stroke="#a0a0a0" stroke-width="1.4"/><circle cx="8" cy="8" r="3.5" fill="none" stroke="#a0a0a0" stroke-width="1.4"/></svg>
<svg style="left:650.7px;top:7.9px" width="20" height="20" viewBox="0 0 16 16"><path d="M1 4.5h14M4 4.5v9h8v-9M4 9h8" fill="none" stroke="#a0a0a0" stroke-width="1.4"/><path d="M8 2v2.5" fill="none" stroke="#a0a0a0" stroke-width="1.4"/></svg>
<svg style="left:679.5px;top:7.9px" width="20" height="20" viewBox="0 0 16 16"><path d="M1 4.5h14M4 2.5v11h8v-11M1 8.5h14M4 13.5h8M1 11.5h3M12 11.5h3" fill="none" stroke="#a0a0a0" stroke-width="1.4"/></svg>
<svg style="left:708.2px;top:7.9px" width="20" height="20" viewBox="0 0 16 16"><path d="M1 4.5h5M6 4.5h9M8 4.5v9h7M8 9h6" fill="none" stroke="#a0a0a0" stroke-width="1.4"/><path d="M2.5 6.5l4 2.5l-4 2.5z" fill="#a0a0a0"/></svg>
<svg style="left:737.0px;top:7.9px" width="20" height="20" viewBox="0 0 16 16"><path d="M3 1.5v8.5h11" fill="none" stroke="#a0a0a0" stroke-width="1.4"/></svg>
<svg style="left:765.7px;top:7.9px" width="20" height="20" viewBox="0 0 16 16"><path d="M3 1.5v7.5h4M4.5 13.5l9 -8M6 5.5l8 8" fill="none" stroke="#a0a0a0" stroke-width="1.5999999999999999"/></svg>
</div>
<div class="tb" style="left:800.0px;top:90.5px;width:408.0px;height:37.5px">
<div class="grip" style="left:2.8px"></div><div class="grip" style="left:8px"></div>
<svg style="left:17.0px;top:7.9px" width="20" height="20" viewBox="0 0 16 16"><path d="M2.5 1.5h9v7h-9z" fill="none" stroke="#a0a0a0" stroke-width="1"/><path d="M8 3h5l-1 2.5h2.5l-4 4.5l0.5 -3h-3z" fill="#a0a0a0"/><path d="M0.20000000000000018 14.5l1.3 -3.6M2.5 12.4a1.5 1.6 0 1 1 2.6 1.1M6.1000000000000005 14.5l1.3 -3.6M8.399999999999999 12.4a1.5 1.6 0 1 1 2.6 1.1M12.2 14.5v-2.2a1.3 1.3 0 0 1 2.6 0v2.2" fill="none" stroke="#a0a0a0" stroke-width="0.9"/></svg>
<div class="sep" style="left:46.6px"></div>
<svg style="left:55.7px;top:7.9px" width="20" height="20" viewBox="0 0 16 16"><path d="M1.5 10l6.5 -3l6.5 3l-6.5 3.2z" fill="#fff" stroke="#000" stroke-width="0.9"/><path d="M1.5 11.5l6.5 3.2l6.5 -3.2M1.5 13l6.5 3l6.5 -3" fill="none" stroke="#000" stroke-width="0.9"/><path d="M1.5 10v3M14.5 10v3" fill="none" stroke="#000" stroke-width="0.8"/><path d="M6.6 0.6h2.8v3.7h2.4l-3.8 4l-3.8 -4h2.4z" fill="#0000a0"/></svg>
<svg style="left:84.5px;top:7.9px" width="20" height="20" viewBox="0 0 16 16"><rect x="1.5" y="8.5" width="13" height="6" fill="#fff" stroke="#000" stroke-width="1"/><path d="M2.5 11h11M2.5 13h11" fill="none" stroke="#000" stroke-width="1" stroke-dasharray="1.1 0.9"/><path d="M4 2v3.5h-1.6l2.6 3l2.6 -3h-1.6v-3.5zM10 2v3.5h-1.6l2.6 3l2.6 -3h-1.6v-3.5z" fill="#0000a0"/><path d="M2 1.5h12" fill="none" stroke="#0000c0" stroke-width="0.9" stroke-dasharray="1 1"/><path d="M2 3.5h1M7.5 3.5h1M13.5 3.5h1" fill="none" stroke="#0000c0" stroke-width="0.9"/></svg>
<div class="sep" style="left:114.1px"></div>
<svg style="left:123.2px;top:7.9px" width="20" height="20" viewBox="0 0 16 16"><path d="M1.2 7.6v-2.8a3.3 4.4 0 0 1 6.6 0v2.8z" fill="#a0a0a0"/><path d="M3.6 0.9h1.8v1h-1.8z" fill="#a0a0a0"/><path d="M7.6 3h8v10.6h-8z" fill="#f0f0f0" stroke="#a0a0a0" stroke-width="1.1"/><path d="M9.4 6h4.4l-4.4 4.4h4.4" fill="none" stroke="#a0a0a0" stroke-width="1"/><path d="M9.4 12h4.4" fill="none" stroke="#a0a0a0" stroke-width="0.9"/></svg>
<svg style="left:152.0px;top:7.9px" width="20" height="20" viewBox="0 0 16 16"><path d="M1.2 7.6v-2.8a3.3 4.4 0 0 1 6.6 0v2.8z" fill="#a0a0a0"/><path d="M3.6 0.9h1.8v1h-1.8z" fill="#a0a0a0"/><path d="M7.6 3h8v10.6h-8z" fill="#f0f0f0" stroke="#a0a0a0" stroke-width="1.1"/><path d="M9 5l5.2 6.6M14.2 5l-5.2 6.6" fill="none" stroke="#a0a0a0" stroke-width="1"/></svg>
<svg style="left:180.7px;top:7.9px" width="20" height="20" viewBox="0 0 16 16"><path d="M1.2 7.6v-2.8a3.3 4.4 0 0 1 6.6 0v2.8z" fill="#a0a0a0"/><path d="M3.6 0.9h1.8v1h-1.8z" fill="#a0a0a0"/><path d="M7.6 3h8v10.6h-8z" fill="#f0f0f0" stroke="#a0a0a0" stroke-width="1.1"/><path d="M9.4 9l1.6 2.4l3 -6" fill="none" stroke="#a0a0a0" stroke-width="1.1"/><path d="M3.4 8.6v3.6M1.6 10.6l1.8 2l1.8 -2" fill="none" stroke="#a0a0a0" stroke-width="1.1"/></svg>
<svg style="left:209.5px;top:7.9px" width="20" height="20" viewBox="0 0 16 16"><path d="M1.2 7.6v-2.8a3.3 4.4 0 0 1 6.6 0v2.8z" fill="#a0a0a0"/><path d="M3.6 0.9h1.8v1h-1.8z" fill="#a0a0a0"/><path d="M7.6 3h8v10.6h-8z" fill="#f0f0f0" stroke="#a0a0a0" stroke-width="1.1"/><rect x="10.4" y="10" width="2.2" height="1.4" fill="#a0a0a0"/><path d="M1.6 11h4.4M4.4 9.2l1.8 1.8l-1.8 1.8" fill="none" stroke="#a0a0a0" stroke-width="1.1"/></svg>
<div class="sep" style="left:239.2px"></div>
<svg style="left:248.2px;top:7.9px" width="20" height="20" viewBox="0 0 16 16"><path d="M3 1.5v13" fill="none" stroke="#000" stroke-width="1.2"/><rect x="2" y="1.5" width="4.5" height="3.3" fill="#ffff00" stroke="#000" stroke-width="0.9"/><rect x="2" y="5.7" width="4.5" height="3.3" fill="#ffff00" stroke="#000" stroke-width="0.9"/><rect x="2" y="9.9" width="4.5" height="3.3" fill="#ffff00" stroke="#000" stroke-width="0.9"/><rect x="1.2" y="0.8" width="2.4" height="1.5" fill="#ffff00" stroke="#000" stroke-width="0.6"/><rect x="9.5" y="1.5" width="4.5" height="3.3" fill="#00ffff" stroke="#0000ff" stroke-width="1"/><rect x="9.5" y="5.7" width="4.5" height="3.3" fill="#00ffff" stroke="#0000ff" stroke-width="1"/><rect x="9.5" y="9.9" width="4.5" height="3.3" fill="#00ffff" stroke="#0000ff" stroke-width="1"/><path d="M6.5 3h3M6.5 7.3h3M6.5 11.5h3" fill="none" stroke="#000" stroke-width="0.9"/></svg>
<div class="sep" style="left:277.9px"></div>
<svg style="left:287.0px;top:7.9px" width="20" height="20" viewBox="0 0 16 16"><rect x="1.5" y="1" width="13" height="9.5" fill="#00ffff"/><path d="M2.5 1v9.5" fill="none" stroke="#008000" stroke-width="1.4"/><path d="M4 5.5h2.5M9.5 5.5h5M6.5 2.5v6M9.5 2.5v6M11.5 2.5v6" fill="none" stroke="#000" stroke-width="1.2"/><path d="M1 1h14" fill="none" stroke="#008080" stroke-width="0.9"/><path d="M-0.2999999999999998 14.8l1.3 -3.6M2.0 12.700000000000001a1.5 1.6 0 1 1 2.6 1.1M5.6000000000000005 14.8l1.3 -3.6M7.8999999999999995 12.700000000000001a1.5 1.6 0 1 1 2.6 1.1M11.7 14.8v-2.2a1.3 1.3 0 0 1 2.6 0v2.2" fill="none" stroke="#000" stroke-width="0.9"/></svg>
<svg style="left:315.7px;top:7.9px" width="20" height="20" viewBox="0 0 16 16"><path d="M1 1h13v2.5h-9.5v11h-3.5z" fill="#a0a0a0"/><path d="M5.5 4.5h8.5v9.5h-8.5z" fill="#f0f0f0" stroke="#a0a0a0" stroke-width="1"/><path d="M7.5 7h4l-4 4.5h4" fill="none" stroke="#a0a0a0" stroke-width="0.9"/></svg>
<svg style="left:344.5px;top:7.9px" width="20" height="20" viewBox="0 0 16 16"><path d="M1 1h13v2.5h-9.5v11h-3.5z" fill="#a0a0a0"/><path d="M5.5 4.5h8.5v9.5h-8.5z" fill="#f0f0f0" stroke="#a0a0a0" stroke-width="1"/><path d="M7 6.5l5 6M12 6.5l-5 6" fill="none" stroke="#a0a0a0" stroke-width="0.9"/></svg>
<svg style="left:373.2px;top:7.9px" width="20" height="20" viewBox="0 0 16 16"><path d="M1 1h13v2.5h-9.5v11h-3.5z" fill="#a0a0a0"/><path d="M5.5 4.5h8.5v9.5h-8.5z" fill="#f0f0f0" stroke="#a0a0a0" stroke-width="1"/><path d="M7.5 10l1.5 2.3l3 -6" fill="none" stroke="#a0a0a0" stroke-width="0.9"/></svg>
</div>
<div class="tb" style="left:0.0px;top:128.0px;width:541.0px;height:37.5px">
<div class="grip" style="left:2.8px"></div><div class="grip" style="left:8px"></div>
<div class="chk" style="left:13.2px"></div>
<svg style="left:17.8px;top:8.7px" width="20" height="20" viewBox="0 0 16 16"><rect x="0.8" y="2.2" width="13" height="11" fill="#fff" stroke="#000" stroke-width="1"/><rect x="0.8" y="2.2" width="13" height="2" fill="#0000c0" stroke="#000" stroke-width="0.6"/><rect x="2" y="2.8" width="1.2" height="0.9" fill="#fff"/><rect x="4.3" y="5" width="0.1" height="8" fill="#000" stroke="#000" stroke-width="0.5"/><path d="M6.5 9h3l1 1.3h4.8v5.2h-8.8z" fill="#ffff70" stroke="#000" stroke-width="1"/><path d="M7.5 12h6.5M7.5 13.8h6.5M9 10.5l4 4M13 10.5l-4 4" fill="none" stroke="#e8e800" stroke-width="0.9"/></svg>
<svg style="left:45.7px;top:7.9px" width="20" height="20" viewBox="0 0 16 16"><rect x="1.6" y="0.8" width="13" height="11" fill="#fff" stroke="#000" stroke-width="1"/><rect x="1.6" y="0.8" width="13" height="2" fill="#0000c0" stroke="#000" stroke-width="0.6"/><path d="M1.3 14.8l6.2 -7.4" fill="none" stroke="#000" stroke-width="2.6"/><path d="M1.4 14.7l6 -7.2" fill="none" stroke="#901010" stroke-width="1.5"/><path d="M4.6 4.6c2.2 -1.6 4.8 -1.4 6.4 0.2l1.6 2.4l-1.8 1.6l-2 -1.6l-1.6 0.6z" fill="#8a7a00" stroke="#000" stroke-width="0.8"/></svg>
<svg style="left:74.5px;top:7.9px" width="20" height="20" viewBox="0 0 16 16"><rect x="2.4" y="0.8" width="13" height="10.6" fill="#fff" stroke="#000" stroke-width="1"/><rect x="2.4" y="0.8" width="13" height="2" fill="#0000c0" stroke="#000" stroke-width="0.6"/><path d="M5 4.6h3M9.5 4.6h2M5 6h2" fill="none" stroke="#808080" stroke-width="0.7"/><path d="M2.8 12l4.2 -5.4l1.6 1.2M8 12l4 -5.2l1.4 1" fill="none" stroke="#000" stroke-width="0.9"/><circle cx="3" cy="13.3" r="1.7" fill="#00ffff" stroke="#000" stroke-width="1"/><circle cx="8.2" cy="13.3" r="1.7" fill="#00ffff" stroke="#000" stroke-width="1"/><path d="M4.7 13.3h1.8" fill="none" stroke="#000" stroke-width="0.9"/></svg>
<svg style="left:103.2px;top:7.9px" width="20" height="20" viewBox="0 0 16 16"><rect x="2" y="0.8" width="13" height="10.4" fill="#fff" stroke="#000" stroke-width="1"/><rect x="2" y="0.8" width="13" height="2" fill="#0000c0" stroke="#000" stroke-width="0.6"/><path d="M5.2 7c0.4 -2.2 1.4 -2.4 2.2 -1.8M11.8 7c-0.4 -2.2 -1.4 -2.4 -2.2 -1.8" fill="none" stroke="#0000c0" stroke-width="1"/><path d="M7.8 6.2l1.4 -1" fill="none" stroke="#000" stroke-width="1"/><path d="M1.2 9.6h4.2l1.4 1.4v4.2h-5.6zM9.4 9.6h4.2l1.4 1.4v4.2h-5.6z" fill="#fff" stroke="#000" stroke-width="1.1"/></svg>
<svg style="left:132.0px;top:7.9px" width="20" height="20" viewBox="0 0 16 16"><rect x="3" y="0.8" width="12.6" height="10.8" fill="#fff" stroke="#000" stroke-width="1"/><rect x="3" y="0.8" width="12.6" height="2" fill="#0000c0" stroke="#000" stroke-width="0.6"/><path d="M6 4v7M9 4v7M12 4v7M3.5 6.2h11.5M3.5 8.6h11.5" fill="none" stroke="#e4e4e4" stroke-width="0.6"/><path d="M2 9.4h3.2a0.8 0.8 0 0 1 0.8 0.8v4.2a0.8 0.8 0 0 1 -0.8 0.8h-3.2z" fill="#fff" stroke="#000" stroke-width="1.1"/><path d="M0.6 10.6h1.4M0.6 12.2h1.4M0.6 13.8h1.4" fill="none" stroke="#000" stroke-width="0.8"/></svg>
<svg style="left:160.7px;top:7.9px" width="20" height="20" viewBox="0 0 16 16"><path d="M1.6 6.4h10.4v8.8h-10.4z" fill="#fff" stroke="#000" stroke-width="1.2"/><path d="M3.2 10.4h3M3.2 12h7M3.2 13.6h7" fill="none" stroke="#000" stroke-width="0.9"/><path d="M4.8 6.2l4.2 -4.6l4.4 2l-3.6 5.2z" fill="#c8c8c8" stroke="#000" stroke-width="0.9"/><path d="M6.4 6.4l3.4 -3.6M7.6 7l3.4 -3.6M9 7.4l3 -3.2" fill="none" stroke="#000" stroke-width="0.5"/><path d="M14 1.2v6l1.4 -1.2v-3.6z" fill="#0000c0"/><path d="M9.4 1.4l4.6 0.2" fill="none" stroke="#000" stroke-width="0.9"/></svg>
<div class="sep" style="left:190.4px"></div>
<svg style="left:199.5px;top:7.9px" width="20" height="20" viewBox="0 0 16 16"><path d="M2 9.5h3.5l1 1v4h-4.5zM9 9.5h3.5l1 1v4h-4.5z" fill="#fff" stroke="#000" stroke-width="1"/><path d="M4 2l8 7M12 2l-8 7" fill="none" stroke="#000" stroke-width="1.1"/><path d="M7 1.5l1 1.5l1 -1.5" fill="none" stroke="#0000c0" stroke-width="1"/><path d="M3 3.5l1.5 0.5M13 3.5l-1.5 0.5" fill="none" stroke="#0000c0" stroke-width="0.9"/></svg>
<svg style="left:228.2px;top:7.9px" width="20" height="20" viewBox="0 0 16 16"><path d="M3 3.5a1.5 1.5 0 0 1 1.5 -1.5h7a1.5 1.5 0 0 1 1.5 1.5v3h-10z" fill="#a0a0a0"/><path d="M4.5 4h7" fill="none" stroke="#f0f0f0" stroke-width="1.2" stroke-dasharray="1 0.7"/><path d="M2.5 8.5h11M2.5 10.5h11" fill="none" stroke="#a0a0a0" stroke-width="0.8" stroke-dasharray="1.2 0.8"/><path d="M3 14.5c0.2 -2 1.6 -2 2 -1M7 14.5c0.2 -2 1.6 -2 2 -1M11 14.5c0.2 -2 1.6 -2 2 -1" fill="none" stroke="#a0a0a0" stroke-width="0.9"/></svg>
<svg style="left:257.0px;top:7.9px" width="20" height="20" viewBox="0 0 16 16"><path d="M1.5 1.5v13" fill="none" stroke="#000" stroke-width="1.2"/><path d="M3 1.5h11.5v9l-2.5 0l-1.5 3.5l-2 1h-5.5z" fill="#fff" stroke="#000" stroke-width="1"/><path d="M4.3 2v12.5" fill="none" stroke="#00a000" stroke-width="1.2"/><path d="M7 4v5M10.5 4v5M7 6.5h3.5M10.5 5.5h3" fill="none" stroke="#000" stroke-width="1"/></svg>
<svg style="left:285.7px;top:7.9px" width="20" height="20" viewBox="0 0 16 16"><rect x="2" y="2" width="12" height="12.5" fill="none" stroke="#a0a0a0" stroke-width="1"/><path d="M2 4.5h12" fill="none" stroke="#a0a0a0" stroke-width="1"/><rect x="4" y="6.5" width="8" height="2.5" fill="none" stroke="#a0a0a0" stroke-width="0.9"/><path d="M4 11h8M4 13h8" fill="none" stroke="#a0a0a0" stroke-width="0.9" stroke-dasharray="1.5 0.8"/></svg>
<svg style="left:314.5px;top:7.9px" width="20" height="20" viewBox="0 0 16 16"><rect x="1.5" y="1.5" width="13" height="13" fill="#0000d0" stroke="#000" stroke-width="1"/><rect x="2" y="2" width="12" height="2" fill="#fff" stroke="#000" stroke-width="0.5"/><text x="8" y="9" font-size="4.8" fill="#fff" font-weight="bold" font-family="Liberation Sans,sans-serif" text-anchor="middle">001</text><text x="8" y="13.6" font-size="4.8" fill="#fff" font-weight="bold" font-family="Liberation Sans,sans-serif" text-anchor="middle">002</text></svg>
<div class="sep" style="left:344.2px"></div>
<svg style="left:353.2px;top:7.9px" width="20" height="20" viewBox="0 0 16 16"><text x="8" y="9.6" font-size="12" fill="#a0a0a0" font-weight="bold" font-family="Liberation Serif,sans-serif" text-anchor="middle">10</text><path d="M0.7000000000000002 14.5l1.3 -3.6M3.0 12.4a1.5 1.6 0 1 1 2.6 1.1M6.6000000000000005 14.5l1.3 -3.6M8.899999999999999 12.4a1.5 1.6 0 1 1 2.6 1.1M12.7 14.5v-2.2a1.3 1.3 0 0 1 2.6 0v2.2" fill="none" stroke="#a0a0a0" stroke-width="0.9"/></svg>
<div class="chk" style="left:378.2px"></div>
<svg style="left:382.8px;top:8.7px" width="20" height="20" viewBox="0 0 16 16"><text x="8" y="9.6" font-size="12" fill="#a0a0a0" font-weight="bold" font-family="Liberation Serif,sans-serif" text-anchor="middle">10</text><path d="M0.7000000000000002 14.5l1.3 -3.6M3.0 12.4a1.5 1.6 0 1 1 2.6 1.1M6.6000000000000005 14.5l1.3 -3.6M8.899999999999999 12.4a1.5 1.6 0 1 1 2.6 1.1M12.7 14.5v-2.2a1.3 1.3 0 0 1 2.6 0v2.2" fill="none" stroke="#a0a0a0" stroke-width="0.9"/><path d="M8 4v9M5 10l3 3l3 -3" fill="none" stroke="#a0a0a0" stroke-width="1.1"/></svg>
<svg style="left:410.7px;top:7.9px" width="20" height="20" viewBox="0 0 16 16"><text x="8" y="9.6" font-size="12" fill="#a0a0a0" font-weight="bold" font-family="Liberation Serif,sans-serif" text-anchor="middle">16</text><path d="M0.7000000000000002 14.5l1.3 -3.6M3.0 12.4a1.5 1.6 0 1 1 2.6 1.1M6.6000000000000005 14.5l1.3 -3.6M8.899999999999999 12.4a1.5 1.6 0 1 1 2.6 1.1M12.7 14.5v-2.2a1.3 1.3 0 0 1 2.6 0v2.2" fill="none" stroke="#a0a0a0" stroke-width="0.9"/></svg>
<div class="sep" style="left:440.4px"></div>
<svg style="left:449.5px;top:7.9px" width="20" height="20" viewBox="0 0 16 16"><path d="M7 1l5.5 5.5h-3v3h3v5h-8v-8h-3z" fill="#a0a0a0"/></svg>
<svg style="left:478.2px;top:7.9px" width="20" height="20" viewBox="0 0 16 16"><path d="M2 2h6v4h6v5h-3v3l-3 -1.5l-1.5 1.5v-3h-1.5l-1 -5h-2z" fill="#a0a0a0"/><path d="M8.5 8l3 4" fill="none" stroke="#f0f0f0" stroke-width="0.7"/></svg>
<svg style="left:507.0px;top:7.9px" width="20" height="20" viewBox="0 0 16 16"><path d="M8 1h5l-1.2 2.5h2.5l-4.3 5l0.8 -3.5h-3z" fill="#a0a0a0"/><path d="M1.5 2h5M1.5 4h4M1.5 6h4M1.5 8h6M1.5 10h11" fill="none" stroke="#a0a0a0" stroke-width="0.8" stroke-dasharray="1 0.6"/><path d="M0.20000000000000018 14.5l1.3 -3.6M2.5 12.4a1.5 1.6 0 1 1 2.6 1.1M6.1000000000000005 14.5l1.3 -3.6M8.399999999999999 12.4a1.5 1.6 0 1 1 2.6 1.1M12.2 14.5v-2.2a1.3 1.3 0 0 1 2.6 0v2.2" fill="none" stroke="#a0a0a0" stroke-width="0.9"/></svg>
</div>
<div class="tb" style="left:542.0px;top:128.0px;width:416.5px;height:37.5px">
<div class="grip" style="left:2.8px"></div><div class="grip" style="left:8px"></div>
<svg style="left:17.0px;top:7.9px" width="20" height="20" viewBox="0 0 16 16"><path d="M1.5 2.5a1 1 0 0 1 1 -1h10a1 1 0 0 1 1 1v7h-12z" fill="#00ffff" stroke="#000" stroke-width="1.3"/><path d="M2 10h13v4.5a1 1 0 0 1 -1 1h-9.5l-2.5 -2z" fill="#fff" stroke="#000" stroke-width="1.3"/><path d="M5 11v2" fill="none" stroke="#000" stroke-width="1"/><rect x="4.5" y="9" width="1.4" height="1" fill="#00a000"/><path d="M12.3 4.5L16.1 11.149999999999999L8.5 11.149999999999999Z" fill="#ffff00" stroke="#000" stroke-width="0.9" stroke-linejoin="round"/><path d="M12.3 6.8275v1.9949999999999997" fill="none" stroke="#000" stroke-width="0.855"/><rect x="11.8725" y="9.4875" width="0.855" height="0.76" fill="#000"/></svg>
<svg style="left:45.7px;top:7.9px" width="20" height="20" viewBox="0 0 16 16"><path d="M4.5 4.5h9.5v7h-9.5z" fill="#c0c0c0" stroke="#000" stroke-width="1.3"/><rect x="7.5" y="7" width="4" height="3" fill="#0000ff" stroke="#fff" stroke-width="0.6"/><path d="M3 12h11l1.5 2.5h-11z" fill="#c0c0c0" stroke="#000" stroke-width="1.1"/><path d="M3 12v1.5l2 1.5" fill="none" stroke="#000" stroke-width="1"/><path d="M4.2 1L7.4 6.6000000000000005L1 6.6000000000000005Z" fill="#ffff00" stroke="#000" stroke-width="0.9" stroke-linejoin="round"/><path d="M4.2 2.96v1.6800000000000002" fill="none" stroke="#000" stroke-width="0.7200000000000001"/><rect x="3.8400000000000003" y="5.2" width="0.7200000000000001" height="0.6400000000000001" fill="#000"/><path d="M8 2.5h6v2" fill="none" stroke="#000" stroke-width="1.2"/></svg>
<div class="sep" style="left:75.4px"></div>
<svg style="left:84.5px;top:7.9px" width="20" height="20" viewBox="0 0 16 16"><path d="M2 2h9M2 4.5h9M2 7h9M2 9.5h5" fill="none" stroke="#a0a0a0" stroke-width="1"/><path d="M8.5 5.5h6v6.5h-2.5" fill="none" stroke="#a0a0a0" stroke-width="1"/><circle cx="11.5" cy="12" r="2.2" fill="none" stroke="#a0a0a0" stroke-width="1"/><path d="M10.5 11l2 2M12.5 11l-2 2" fill="none" stroke="#a0a0a0" stroke-width="0.7"/><path d="M2 2v9.5h6" fill="none" stroke="#a0a0a0" stroke-width="0.8"/></svg>
<div class="sep" style="left:114.1px"></div>
<svg style="left:123.2px;top:7.9px" width="20" height="20" viewBox="0 0 16 16"><path d="M4.5 9v-4.5a0.9 0.9 0 0 1 1.8 0v-2a0.9 0.9 0 0 1 1.8 0v-0.5a0.9 0.9 0 0 1 1.8 0v1a0.9 0.9 0 0 1 1.8 0v7c0 3 -1 4.5 -3.5 4.5c-2.5 0 -3.5 -1.5 -5.5 -5c-0.6 -1.2 0.6 -1.8 1.8 -0.5z" fill="none" stroke="#a0a0a0" stroke-width="0.9"/><path d="M6.3 4.5v3M8.1 3v4.5M9.9 3.5v4" fill="none" stroke="#a0a0a0" stroke-width="0.7"/><path d="M9 10v4.5M11 10v4.5" fill="none" stroke="#a0a0a0" stroke-width="1.1"/><path d="M12.5 11l2.5 2l-2.5 2z" fill="#a0a0a0"/></svg>
<svg style="left:152.0px;top:7.9px" width="20" height="20" viewBox="0 0 16 16"><path d="M4.5 9v-4.5a0.9 0.9 0 0 1 1.8 0v-2a0.9 0.9 0 0 1 1.8 0v-0.5a0.9 0.9 0 0 1 1.8 0v1a0.9 0.9 0 0 1 1.8 0v7c0 3 -1 4.5 -3.5 4.5c-2.5 0 -3.5 -1.5 -5.5 -5c-0.6 -1.2 0.6 -1.8 1.8 -0.5z" fill="none" stroke="#a0a0a0" stroke-width="0.9"/><path d="M6.3 4.5v3M8.1 3v4.5M9.9 3.5v4" fill="none" stroke="#a0a0a0" stroke-width="0.7"/><path d="M3 6l10 6M13 4l-9 9" fill="none" stroke="#a0a0a0" stroke-width="1.6"/><path d="M12.5 11l2.5 2l-2.5 2z" fill="#a0a0a0"/></svg>
<svg style="left:180.7px;top:7.9px" width="20" height="20" viewBox="0 0 16 16"><path d="M3.5 2.5l9.5 5.5l-9.5 5.5z" fill="#a0a0a0"/></svg>
<svg style="left:209.5px;top:7.9px" width="20" height="20" viewBox="0 0 16 16"><rect x="3.5" y="3.5" width="9.5" height="9.5" fill="#a0a0a0"/></svg>
<svg style="left:238.2px;top:7.9px" width="20" height="20" viewBox="0 0 16 16"><rect x="3.5" y="3" width="3.5" height="10.5" fill="#a0a0a0"/><rect x="9" y="3" width="3.5" height="10.5" fill="#a0a0a0"/></svg>
<svg style="left:267.0px;top:7.9px" width="20" height="20" viewBox="0 0 16 16"><path d="M2 2.5l9 5.5l-9 5.5z" fill="#a0a0a0"/><rect x="11" y="2.5" width="2.6" height="11" fill="#a0a0a0"/></svg>
<svg style="left:295.7px;top:7.9px" width="20" height="20" viewBox="0 0 16 16"><path d="M1 1.5l3 3.5" fill="none" stroke="#a0a0a0" stroke-width="1.2"/><rect x="5" y="1.5" width="1.4" height="8" fill="#a0a0a0"/><rect x="8" y="1.5" width="1.4" height="5" fill="#a0a0a0"/><path d="M6.5 8h5v-3l3.5 0" fill="none" stroke="#a0a0a0" stroke-width="1.3"/><path d="M3 9.5h10v4.5h-10z" fill="#a0a0a0"/><path d="M1.5 11h2M12.5 11h2.5" fill="none" stroke="#a0a0a0" stroke-width="1"/></svg>
<svg style="left:324.5px;top:7.9px" width="20" height="20" viewBox="0 0 16 16"><rect x="9.5" y="1.5" width="1.4" height="7" fill="#a0a0a0"/><rect x="12.5" y="1" width="1.4" height="9" fill="#a0a0a0"/><path d="M5.5 3l3.5 3.5l-3.5 3.5" fill="none" stroke="#a0a0a0" stroke-width="1.6"/><path d="M3 9h10.5v5h-10.5z" fill="#a0a0a0"/><path d="M1.5 10.5h2M1.5 13h2M13 11.5h2" fill="none" stroke="#a0a0a0" stroke-width="1"/></svg>
<svg style="left:353.2px;top:7.9px" width="20" height="20" viewBox="0 0 16 16"><path d="M2 2.5l6 5.5l-6 5.5zM8.5 2.5l6 5.5l-6 5.5z" fill="#a0a0a0"/></svg>
<svg style="left:382.0px;top:7.9px" width="20" height="20" viewBox="0 0 16 16"><path d="M1.5 3l9 4.5v-5h3v11h-3v-5l-9 4.5l0.8 -2l6 -3l-6 -3z" fill="#a0a0a0"/></svg>
</div>
<div class="tb" style="left:1100.0px;top:128.0px;width:319.0px;height:37.5px">
<div class="grip" style="left:2.8px"></div><div class="grip" style="left:8px"></div>
<svg style="left:17.0px;top:7.9px" width="20" height="20" viewBox="0 0 16 16"><rect x="1.5" y="5.5" width="12.5" height="5.5" fill="#a0a0a0"/><path d="M2.3 6.5h10.9" fill="none" stroke="#d8d8d8" stroke-width="0.4" stroke-dasharray="0.6 0.6"/><path d="M2.3 7.6h10.9" fill="none" stroke="#d8d8d8" stroke-width="0.4" stroke-dasharray="0.6 0.6"/><path d="M2.3 8.7h10.9" fill="none" stroke="#d8d8d8" stroke-width="0.4" stroke-dasharray="0.6 0.6"/><path d="M2.3 9.8h10.9" fill="none" stroke="#d8d8d8" stroke-width="0.4" stroke-dasharray="0.6 0.6"/><path d="M7 11l0.8 1.2l0.8 -1.2" fill="none" stroke="#a0a0a0" stroke-width="0.8"/></svg>
<svg style="left:45.7px;top:7.9px" width="20" height="20" viewBox="0 0 16 16"><rect x="1" y="4.5" width="14" height="6.5" fill="#a0a0a0"/><path d="M1.8 5.5h12.4" fill="none" stroke="#d8d8d8" stroke-width="0.4" stroke-dasharray="0.6 0.6"/><path d="M1.8 6.6h12.4" fill="none" stroke="#d8d8d8" stroke-width="0.4" stroke-dasharray="0.6 0.6"/><path d="M1.8 7.7h12.4" fill="none" stroke="#d8d8d8" stroke-width="0.4" stroke-dasharray="0.6 0.6"/><path d="M1.8 8.8h12.4" fill="none" stroke="#d8d8d8" stroke-width="0.4" stroke-dasharray="0.6 0.6"/><path d="M1.8 9.9h12.4" fill="none" stroke="#d8d8d8" stroke-width="0.4" stroke-dasharray="0.6 0.6"/><path d="M7 11l0.8 1.2l0.8 -1.2" fill="none" stroke="#a0a0a0" stroke-width="0.8"/></svg>
<svg style="left:74.5px;top:7.9px" width="20" height="20" viewBox="0 0 16 16"><rect x="1.5" y="5" width="13" height="6.5" fill="#a0a0a0"/><path d="M2.3 6.0h11.4" fill="none" stroke="#d8d8d8" stroke-width="0.4" stroke-dasharray="0.6 0.6"/><path d="M2.3 7.1h11.4" fill="none" stroke="#d8d8d8" stroke-width="0.4" stroke-dasharray="0.6 0.6"/><path d="M2.3 8.2h11.4" fill="none" stroke="#d8d8d8" stroke-width="0.4" stroke-dasharray="0.6 0.6"/><path d="M2.3 9.3h11.4" fill="none" stroke="#d8d8d8" stroke-width="0.4" stroke-dasharray="0.6 0.6"/><path d="M2.3 10.4h11.4" fill="none" stroke="#d8d8d8" stroke-width="0.4" stroke-dasharray="0.6 0.6"/><path d="M6.5 2.5h3l-1.5 2.5z" fill="#a0a0a0"/><path d="M8 11.5v2" fill="none" stroke="#a0a0a0" stroke-width="0.9"/></svg>
<svg style="left:103.2px;top:7.9px" width="20" height="20" viewBox="0 0 16 16"><rect x="1.5" y="4" width="13" height="7" fill="#a0a0a0"/><path d="M2.3 5.0h11.4" fill="none" stroke="#d8d8d8" stroke-width="0.4" stroke-dasharray="0.6 0.6"/><path d="M2.3 6.1h11.4" fill="none" stroke="#d8d8d8" stroke-width="0.4" stroke-dasharray="0.6 0.6"/><path d="M2.3 7.2h11.4" fill="none" stroke="#d8d8d8" stroke-width="0.4" stroke-dasharray="0.6 0.6"/><path d="M2.3 8.3h11.4" fill="none" stroke="#d8d8d8" stroke-width="0.4" stroke-dasharray="0.6 0.6"/><path d="M2.3 9.4h11.4" fill="none" stroke="#d8d8d8" stroke-width="0.4" stroke-dasharray="0.6 0.6"/><path d="M2.3 10.5h11.4" fill="none" stroke="#d8d8d8" stroke-width="0.4" stroke-dasharray="0.6 0.6"/><path d="M8 2.5v1.5M8 11v2.5M5 14h6" fill="none" stroke="#a0a0a0" stroke-width="1"/></svg>
<svg style="left:132.0px;top:7.9px" width="20" height="20" viewBox="0 0 16 16"><path d="M2 3h12" fill="none" stroke="#a0a0a0" stroke-width="1.4" stroke-dasharray="0.8 0.5"/><path d="M2 2v1M14 2v1M8 3.5v9.5M3 8h10M5 13h6" fill="none" stroke="#a0a0a0" stroke-width="1"/></svg>
<svg style="left:160.7px;top:7.9px" width="20" height="20" viewBox="0 0 16 16"><path d="M3 3h10" fill="none" stroke="#a0a0a0" stroke-width="1.4" stroke-dasharray="0.8 0.5"/><path d="M8 3.5v4.5M1 8h14M4 8v6.5M12 8v6.5M2 12.5h4M10 12.5h4" fill="none" stroke="#a0a0a0" stroke-width="1"/></svg>
<svg style="left:189.5px;top:7.9px" width="20" height="20" viewBox="0 0 16 16"><path d="M4 1v6M12 1v6M2 3h4M10 3h4M1 7.5h14M8 7.5v3.5" fill="none" stroke="#a0a0a0" stroke-width="1"/><path d="M3 11.5h10" fill="none" stroke="#a0a0a0" stroke-width="1.4" stroke-dasharray="0.8 0.5"/><path d="M3 12.5h10" fill="none" stroke="#a0a0a0" stroke-width="0.6"/></svg>
<svg style="left:218.2px;top:7.9px" width="20" height="20" viewBox="0 0 16 16"><path d="M8 1v6M6 3h4M1 7.5h14M4 7.5v4M12 7.5v4M1 11.5h6M9 11.5h6" fill="none" stroke="#a0a0a0" stroke-width="1"/><path d="M1.5 13h5M9.5 13h5" fill="none" stroke="#a0a0a0" stroke-width="1.4" stroke-dasharray="0.8 0.5"/></svg>
<svg style="left:247.0px;top:7.9px" width="20" height="20" viewBox="0 0 16 16"><path d="M1.5 2h5M9.5 2h5" fill="none" stroke="#a0a0a0" stroke-width="1.4" stroke-dasharray="0.8 0.5"/><path d="M4 2.5v4M12 2.5v4M1 6.5h14M8 6.5v8M1 10h14M6 12.5h4" fill="none" stroke="#a0a0a0" stroke-width="1"/></svg>
<div class="sep" style="left:276.7px"></div>
<svg style="left:285.7px;top:7.9px" width="20" height="20" viewBox="0 0 16 16"><path d="M3.5 4v4.5h8.5v4" fill="none" stroke="#a0a0a0" stroke-width="1.1"/></svg>
</div>
<div class="tb" style="left:0.0px;top:165.5px;width:272.0px;height:37.5px">
<div class="grip" style="left:2.8px"></div><div class="grip" style="left:8px"></div>
<svg style="left:17.0px;top:7.9px" width="20" height="20" viewBox="0 0 16 16"><path d="M7 2h6M7 4.5h6M5 7h8M7 9.5h6M7 12h6" fill="none" stroke="#a0a0a0" stroke-width="1"/><path d="M5.5 7h-4M3.5 5l-2 2l2 2" fill="none" stroke="#a0a0a0" stroke-width="1"/><path d="M5.5 1v13" fill="none" stroke="#a0a0a0" stroke-width="0.7" stroke-dasharray="1 1"/></svg>
<svg style="left:45.7px;top:7.9px" width="20" height="20" viewBox="0 0 16 16"><path d="M8 2h6M8 4.5h6M6 7h8M8 9.5h6M8 12h6" fill="none" stroke="#a0a0a0" stroke-width="1"/><path d="M1.5 7h4M3.5 5l2 2l-2 2" fill="none" stroke="#a0a0a0" stroke-width="1"/><path d="M6.5 1v13" fill="none" stroke="#a0a0a0" stroke-width="0.7" stroke-dasharray="1 1"/></svg>
<div class="sep" style="left:75.4px"></div>
<svg style="left:84.5px;top:7.9px" width="20" height="20" viewBox="0 0 16 16"><path d="M3 2.5h9M4.5 5h7.5M4.5 7.5h7.5M4.5 10h7.5M3 12.5h9" fill="none" stroke="#a0a0a0" stroke-width="1"/></svg>
<svg style="left:113.2px;top:7.9px" width="20" height="20" viewBox="0 0 16 16"><path d="M4.5 6.5h8M4.5 9h8M4.5 11.5h8M3.5 14h9" fill="none" stroke="#a0a0a0" stroke-width="1"/><path d="M4 4.5c0 -3 5 -3.5 6.5 -1" fill="none" stroke="#a0a0a0" stroke-width="1"/><path d="M11 1.5v2.5h-2.5" fill="none" stroke="#a0a0a0" stroke-width="0.9"/></svg>
<div class="sep" style="left:142.9px"></div>
<svg style="left:152.0px;top:7.9px" width="20" height="20" viewBox="0 0 16 16"><path d="M2 14l8.5 -10" fill="none" stroke="#a0a0a0" stroke-width="1"/><path d="M6.5 8.5l3 -3.5l4.5 3.5l-3 3.5z" fill="#a0a0a0"/></svg>
<svg style="left:180.7px;top:7.9px" width="20" height="20" viewBox="0 0 16 16"><path d="M2 14l8.5 -10" fill="none" stroke="#a0a0a0" stroke-width="1"/><path d="M6.5 8.5l3 -3.5l4.5 3.5l-3 3.5z" fill="#a0a0a0"/><path d="M3 4c1 -2.5 4 -2.5 5 -0.5" fill="none" stroke="#a0a0a0" stroke-width="0.9"/><path d="M2.5 1.5v2.8h2.5" fill="none" stroke="#a0a0a0" stroke-width="0.9"/></svg>
<svg style="left:209.5px;top:7.9px" width="20" height="20" viewBox="0 0 16 16"><path d="M2 14l8.5 -10" fill="none" stroke="#a0a0a0" stroke-width="1"/><path d="M6.5 8.5l3 -3.5l4.5 3.5l-3 3.5z" fill="#a0a0a0"/><path d="M3 4c1 -2.5 4 -2.5 5 -0.5" fill="none" stroke="#a0a0a0" stroke-width="0.9"/><path d="M8.5 1v2.8h-2.5" fill="none" stroke="#a0a0a0" stroke-width="0.9"/></svg>
<svg style="left:238.2px;top:7.9px" width="20" height="20" viewBox="0 0 16 16"><path d="M2 14l8.5 -10" fill="none" stroke="#a0a0a0" stroke-width="1"/><path d="M6.5 8.5l3 -3.5l4.5 3.5l-3 3.5z" fill="#a0a0a0"/><path d="M3 2l7 7M9 1.5l-5 7" fill="none" stroke="#a0a0a0" stroke-width="1.1"/></svg>
</div>
<div style="left:0;top:52px;width:1919px;height:1.4px;background:#a6a6a6"></div>
<div style="left:0;top:202px;width:1919px;height:1.3px;background:#b2b2b2"></div>
<div style="left:377.5px;top:204px;width:1.5px;height:799px;background:#fff"></div><div style="left:380.5px;top:204px;width:1.5px;height:799px;background:#fff"></div>
<!-- LEFT PANEL -->
<div style="left:6px;top:210px;width:330px;height:3.2px;border-top:1.6px solid #fff;border-bottom:1.4px solid #a6a6a6;border-right:1px solid #a6a6a6"></div>
<div style="left:6px;top:215px;width:330px;height:3.2px;border-top:1.6px solid #fff;border-bottom:1.4px solid #a6a6a6;border-right:1px solid #a6a6a6"></div>
<div style="left:337.6px;top:206.4px;width:14.6px;height:14.6px;border:2px solid #909090;border-top:1px solid #fff;border-left:1px solid #fff"></div>
<svg style="left:340.4px;top:211px" width="8" height="5.4" viewBox="0 0 9 6"><path d="M0.5 0.5h8l-4 4.5z" fill="#a0a0a0"/><path d="M1 0.2h7" stroke="#c8c8c8" stroke-width="0.6"/></svg>
<div style="left:354.8px;top:206.4px;width:14.2px;height:14.6px;border:2px solid #808080;border-top:1px solid #fff;border-left:1px solid #fff"></div>
<svg style="left:357px;top:210.6px" width="8.2" height="6.6" viewBox="0 0 9 8"><path d="M1 0.8l7 6.4M8 0.8l-7 6.4" stroke="#000" stroke-width="2.6"/></svg>
<div style="left:4px;top:224px;width:366px;height:756px;background:#fff;border:1px solid #a0a0a0;border-right-color:#fff;border-bottom-color:#fff"></div>
<div style="left:5px;top:225px;width:364px;height:754px;border:1px solid #696969;border-right-color:#e3e3e3;border-bottom-color:#e3e3e3"></div>
<div style="left:40px;top:248px;width:1px;height:10px;background-image:repeating-linear-gradient(180deg,#808080 0 1px,transparent 1px 2px)"></div>
<div style="left:64px;top:273px;width:1px;height:285px;background-image:repeating-linear-gradient(180deg,#808080 0 1px,transparent 1px 2px)"></div>
<div style="left:88px;top:423px;width:1px;height:10px;background-image:repeating-linear-gradient(180deg,#808080 0 1px,transparent 1px 2px)"></div>
<div style="left:112px;top:448px;width:1px;height:91px;background-image:repeating-linear-gradient(180deg,#808080 0 1px,transparent 1px 2px)"></div>
<div style="left:88px;top:573px;width:1px;height:41px;background-image:repeating-linear-gradient(180deg,#808080 0 1px,transparent 1px 2px)"></div>
<div style="left:22px;top:238px;width:8px;height:1px;background-image:repeating-linear-gradient(90deg,#808080 0 1px,transparent 1px 2px)"></div>
<div style="left:11px;top:233px;width:11px;height:11px;background:#fff;border:1px solid #848484"></div>
<div style="left:14px;top:238px;width:5px;height:1px;background:#000"></div>
<svg style="left:29.5px;top:228.0px" width="20" height="20" viewBox="0 0 16 16"><path d="M8 3v3M3.5 6h9M3.5 6v2M12.5 6v2M8 6v2M8 10v2.5" fill="none" stroke="#000" stroke-width="0.9"/><rect x="5.5" y="0.8" width="5" height="2.6" fill="#fff" stroke="#000" stroke-width="0.9"/><path d="M1.2 7.6h3a1 1 0 0 1 0 2.4h-3a1 1 0 0 1 0 -2.4z" fill="#fff" stroke="#000" stroke-width="0.9"/><path d="M6.5 7.6h3a1 1 0 0 1 0 2.4h-3a1 1 0 0 1 0 -2.4z" fill="#fff" stroke="#000" stroke-width="0.9"/><path d="M11.2 7.6h3a1 1 0 0 1 0 2.4h-3a1 1 0 0 1 0 -2.4z" fill="#fff" stroke="#000" stroke-width="0.9"/><path d="M3.2 12.2h3a1 1 0 0 1 0 2.4h-3a1 1 0 0 1 0 -2.4z" fill="#fff" stroke="#000" stroke-width="0.9"/><path d="M8.8 12.2h3a1 1 0 0 1 0 2.4h-3a1 1 0 0 1 0 -2.4z" fill="#fff" stroke="#000" stroke-width="0.9"/><path d="M4.7 10v2.2M10.3 10v2.2" fill="none" stroke="#000" stroke-width="0.9"/></svg>
<span class="tree" style="left:55.5px;top:228px">新工程</span>
<div style="left:46px;top:263px;width:8px;height:1px;background-image:repeating-linear-gradient(90deg,#808080 0 1px,transparent 1px 2px)"></div>
<div style="left:35px;top:258px;width:11px;height:11px;background:#fff;border:1px solid #848484"></div>
<div style="left:38px;top:263px;width:5px;height:1px;background:#000"></div>
<svg style="left:53.5px;top:253.0px" width="20" height="20" viewBox="0 0 16 16"><path d="M1 2a1 1 0 0 1 1 -1h12a1 1 0 0 1 1 1v11l-2 2h-12z" fill="#000"/><rect x="3" y="3" width="4.5" height="3.5" fill="#c0c0c0"/><rect x="3.8" y="3.8" width="1.2" height="1.8" fill="#000"/><rect x="5.6" y="3.8" width="1.2" height="1.8" fill="#000"/><rect x="8.5" y="3" width="4.5" height="1.6" fill="#c0c0c0"/><rect x="9.5" y="3.2" width="2.5" height="1" fill="#ff0000"/><rect x="8.5" y="5.2" width="4.5" height="1.2" fill="#c0c0c0"/><path d="M2 8h11" fill="none" stroke="#c0c0c0" stroke-width="0.8"/><rect x="3" y="10" width="1.4" height="3.5" fill="#c0c0c0"/><rect x="6" y="10" width="1.4" height="3.5" fill="#808080"/><path d="M9.5 10.5l2.5 1.5l-2.5 1.5z" fill="#c0c0c0"/></svg>
<span class="tree" style="left:79.5px;top:253px">ST4[CJ2M] 离线</span>
<div style="left:64px;top:288px;width:14px;height:1px;background-image:repeating-linear-gradient(90deg,#808080 0 1px,transparent 1px 2px)"></div>
<svg style="left:77.5px;top:278.0px" width="20" height="20" viewBox="0 0 16 16"><rect x="1" y="1" width="4.5" height="4.5" fill="#0000ff"/><rect x="10.5" y="2" width="4" height="3.5" fill="#ff0000"/><rect x="10.5" y="9" width="4" height="4.5" fill="#ffff00" stroke="#a0a000" stroke-width="0.5"/><path d="M5.5 4h3.5v3.5h2M9 7.5v4h2" fill="none" stroke="#808080" stroke-width="0.9"/></svg>
<span class="tree" style="left:103.5px;top:278px">数据类型</span>
<div style="left:64px;top:313px;width:14px;height:1px;background-image:repeating-linear-gradient(90deg,#808080 0 1px,transparent 1px 2px)"></div>
<svg style="left:77.5px;top:303.0px" width="20" height="20" viewBox="0 0 16 16"><path d="M3 3.5a1.5 1.5 0 0 1 1.5 -1.5h8a1.5 1.5 0 0 1 1.5 1.5v3.5h-11z" fill="#ffff00" stroke="#606000" stroke-width="0.9"/><path d="M4.5 4h7" fill="none" stroke="#fff" stroke-width="1.2" stroke-dasharray="1 0.7"/><circle cx="12.7" cy="3.3" r="0.6" fill="#000"/><path d="M2 9h11.5M2 11h11.5" fill="none" stroke="#000" stroke-width="0.9" stroke-dasharray="1.6 0.8"/><path d="M13 7v3" fill="none" stroke="#000" stroke-width="0.9"/><path d="M2.5 15c0.2 -2 1.8 -2 2.2 -1M7 15c0.2 -2 1.8 -2 2.2 -1M11.5 15c0.2 -2 1.8 -2 2.2 -1" fill="none" stroke="#000" stroke-width="1"/></svg>
<span class="tree" style="left:103.5px;top:303px">符号</span>
<div style="left:64px;top:338px;width:14px;height:1px;background-image:repeating-linear-gradient(90deg,#808080 0 1px,transparent 1px 2px)"></div>
<svg style="left:77.5px;top:328.0px" width="20" height="20" viewBox="0 0 16 16"><rect x="0.5" y="0.5" width="15" height="15" fill="#00ffff"/><path d="M2 4.5a1.5 1.5 0 0 1 1.5 -1.5h2a1.5 1.5 0 0 1 1.5 1.5v7h-5z" fill="#000"/><rect x="3.5" y="4.5" width="1" height="5" fill="#808080"/><path d="M3 11.5h3v1.5l-1.5 1l-1.5 -1z" fill="#000"/><path d="M8.5 2.5h5.5v3h-1.5v-1h-4z" fill="#000"/><rect x="10.5" y="4.5" width="2" height="9.5" fill="#e0c000" stroke="#000" stroke-width="0.5"/></svg>
<span class="tree" style="left:103.5px;top:328px">IO表和单元设置</span>
<div style="left:64px;top:363px;width:14px;height:1px;background-image:repeating-linear-gradient(90deg,#808080 0 1px,transparent 1px 2px)"></div>
<svg style="left:77.5px;top:353.0px" width="20" height="20" viewBox="0 0 16 16"><path d="M2.5 2.5a1 1 0 0 1 1 -1h9a1 1 0 0 1 1 1v11a1 1 0 0 1 -1 1h-9a1 1 0 0 1 -1 -1z" fill="#fff" stroke="#000" stroke-width="1.1"/><path d="M4 3.5h8" fill="none" stroke="#000" stroke-width="1.2" stroke-dasharray="0.9 0.6"/><rect x="4" y="6" width="8" height="6.5" fill="#fff" stroke="#000" stroke-width="0.8"/><circle cx="9" cy="9.8" r="1.8" fill="#ffff00" stroke="#000" stroke-width="0.8"/><path d="M5 11.5h1.5M5 8h2" fill="none" stroke="#000" stroke-width="0.7"/></svg>
<span class="tree" style="left:103.5px;top:353px">设置</span>
<div style="left:64px;top:388px;width:14px;height:1px;background-image:repeating-linear-gradient(90deg,#808080 0 1px,transparent 1px 2px)"></div>
<svg style="left:77.5px;top:378.0px" width="20" height="20" viewBox="0 0 16 16"><path d="M1 9.5l7.5 -5.5l6.5 2.5l-7.5 5.5z" fill="#808080" stroke="#404040" stroke-width="0.7"/><path d="M1 9.5v1.2l6.5 2.6v-1.3M15 6.5v1.2l-7.5 5.6" fill="none" stroke="#404040" stroke-width="0.7"/><path d="M2.5 11.5v1.8M4.5 12.3v1.8M6.5 13v1.8M9.5 12.5v1.5M11.5 11v1.5M13.5 9.5v1.5" fill="none" stroke="#606060" stroke-width="0.8"/></svg>
<span class="tree" style="left:103.5px;top:378px">内存</span>
<div style="left:70px;top:413px;width:8px;height:1px;background-image:repeating-linear-gradient(90deg,#808080 0 1px,transparent 1px 2px)"></div>
<div style="left:59px;top:408px;width:11px;height:11px;background:#fff;border:1px solid #848484"></div>
<div style="left:62px;top:413px;width:5px;height:1px;background:#000"></div>
<svg style="left:77.5px;top:403.0px" width="20" height="20" viewBox="0 0 16 16"><path d="M2 1.5l9 0l0.5 3l2.5 0.5l-0.5 9l-8.5 0.5l-0.5 -3l-2.5 -1z" fill="#a09000" stroke="#403000" stroke-width="0.8"/><path d="M3 3l2 2l-2 2l2 2M6.5 2.5l2 2l-2 2l2 2l-2 2l2 2M10 5.5l2 2l-2 2l2 2l-1 1.5" fill="none" stroke="#f8f080" stroke-width="1"/><path d="M4 5l1.5 -1.5M8 4.5l1.5 -1.5M5 9l1.5 -1.5M9 8.5l1.5 -1.5M8 12.5l1.5 -1.5M11.5 10.5l1 -1" fill="none" stroke="#403000" stroke-width="0.9"/></svg>
<span class="tree" style="left:103.5px;top:403px">程序</span>
<div style="left:94px;top:438px;width:8px;height:1px;background-image:repeating-linear-gradient(90deg,#808080 0 1px,transparent 1px 2px)"></div>
<div style="left:83px;top:433px;width:11px;height:11px;background:#fff;border:1px solid #848484"></div>
<div style="left:86px;top:438px;width:5px;height:1px;background:#000"></div>
<svg style="left:101.5px;top:428.0px" width="20" height="20" viewBox="0 0 16 16"><path d="M3 3a1.5 1.5 0 0 1 1.5 -1.5h7a1.5 1.5 0 0 1 1.5 1.5v5h-10z" fill="#fff" stroke="#000" stroke-width="1"/><path d="M4.5 3.5h7" fill="none" stroke="#000" stroke-width="1" stroke-dasharray="1 0.7"/><path d="M1.5 6h2M12.5 6h2" fill="none" stroke="#000" stroke-width="0.9"/><path d="M7 7.5l2 -1l2 0.5l1.5 1.5l1.5 0.5l-0.5 2l0.5 2.5l-2.5 0.5l-1 -1l-2 1.5l-1 -2.5l-1.5 -1l1 -1.5z" fill="#c0a800" stroke="#403000" stroke-width="0.8"/><path d="M8.5 9.5l1.5 1.5M11 9l1 2M9 12.5l2 -0.5" fill="none" stroke="#fff080" stroke-width="0.9"/><path d="M3.5 10.5c0 -1.5 1.5 -1.5 1.5 0M3 8.5v2" fill="none" stroke="#000" stroke-width="0.8"/></svg>
<span class="tree" style="left:127.5px;top:428px">Output (09)</span>
<div style="left:112px;top:463px;width:14px;height:1px;background-image:repeating-linear-gradient(90deg,#808080 0 1px,transparent 1px 2px)"></div>
<svg style="left:125.5px;top:453.0px" width="20" height="20" viewBox="0 0 16 16"><path d="M3 3.5a1.5 1.5 0 0 1 1.5 -1.5h8a1.5 1.5 0 0 1 1.5 1.5v3.5h-11z" fill="#ffff00" stroke="#606000" stroke-width="0.9"/><path d="M4.5 4h7" fill="none" stroke="#fff" stroke-width="1.2" stroke-dasharray="1 0.7"/><circle cx="12.7" cy="3.3" r="0.6" fill="#000"/><path d="M2 9h11.5M2 11h11.5" fill="none" stroke="#000" stroke-width="0.9" stroke-dasharray="1.6 0.8"/><path d="M13 7v3" fill="none" stroke="#000" stroke-width="0.9"/><path d="M2.5 15c0.2 -2 1.8 -2 2.2 -1M7 15c0.2 -2 1.8 -2 2.2 -1M11.5 15c0.2 -2 1.8 -2 2.2 -1" fill="none" stroke="#000" stroke-width="1"/></svg>
<span class="tree" style="left:151.5px;top:453px">符号</span>
<div style="left:112px;top:488px;width:14px;height:1px;background-image:repeating-linear-gradient(90deg,#808080 0 1px,transparent 1px 2px)"></div>
<svg style="left:125.5px;top:478.0px" width="20" height="20" viewBox="0 0 16 16"><path d="M3 3.5a1.5 1.5 0 0 1 1.5 -1.5h7a1.5 1.5 0 0 1 1.5 1.5v5.5h-10z" fill="#ffff00" stroke="#000" stroke-width="1.1"/><path d="M4.5 4h7" fill="none" stroke="#000" stroke-width="1.1" stroke-dasharray="1 0.7"/><path d="M4.5 6.5h7" fill="none" stroke="#808000" stroke-width="0.8"/><path d="M1.5 6h1.5M13 6h1.5" fill="none" stroke="#000" stroke-width="0.9"/><path d="M5 9v2.5h6v-2.5" fill="#ffff00" stroke="#000" stroke-width="1"/><path d="M6 11.5v2.5h4v-2.5" fill="#ffff00" stroke="#000" stroke-width="1"/><path d="M7 14v1M9 14v1" fill="none" stroke="#000" stroke-width="0.8"/></svg>
<span class="tree" style="left:151.5px;top:478px">P07_Ouput_I_F</span>
<div style="left:112px;top:513px;width:14px;height:1px;background-image:repeating-linear-gradient(90deg,#808080 0 1px,transparent 1px 2px)"></div>
<svg style="left:125.5px;top:503.0px" width="20" height="20" viewBox="0 0 16 16"><path d="M3 3.5a1.5 1.5 0 0 1 1.5 -1.5h7a1.5 1.5 0 0 1 1.5 1.5v5.5h-10z" fill="#ffff00" stroke="#000" stroke-width="1.1"/><path d="M4.5 4h7" fill="none" stroke="#000" stroke-width="1.1" stroke-dasharray="1 0.7"/><path d="M4.5 6.5h7" fill="none" stroke="#808000" stroke-width="0.8"/><path d="M1.5 6h1.5M13 6h1.5" fill="none" stroke="#000" stroke-width="0.9"/><path d="M5 9v2.5h6v-2.5" fill="#ffff00" stroke="#000" stroke-width="1"/><path d="M6 11.5v2.5h4v-2.5" fill="#ffff00" stroke="#000" stroke-width="1"/><path d="M7 14v1M9 14v1" fill="none" stroke="#000" stroke-width="0.8"/></svg>
<span class="tree" style="left:151.5px;top:503px">Clamp_LS_模拟</span>
<div style="left:112px;top:538px;width:14px;height:1px;background-image:repeating-linear-gradient(90deg,#808080 0 1px,transparent 1px 2px)"></div>
<svg style="left:125.5px;top:528.0px" width="20" height="20" viewBox="0 0 16 16"><path d="M3 3.5a1.5 1.5 0 0 1 1.5 -1.5h7a1.5 1.5 0 0 1 1.5 1.5v5.5h-10z" fill="#ffff00" stroke="#000" stroke-width="1.1"/><path d="M4.5 4h7" fill="none" stroke="#000" stroke-width="1.1" stroke-dasharray="1 0.7"/><path d="M4.5 6.5h7" fill="none" stroke="#808000" stroke-width="0.8"/><path d="M1.5 6h1.5M13 6h1.5" fill="none" stroke="#000" stroke-width="0.9"/><path d="M5 9v2.5h6v-2.5" fill="#ffff00" stroke="#000" stroke-width="1"/><path d="M6 11.5v2.5h4v-2.5" fill="#ffff00" stroke="#000" stroke-width="1"/><path d="M7 14v1M9 14v1" fill="none" stroke="#000" stroke-width="0.8"/></svg>
<span class="tree" style="left:151.5px;top:528px">END</span>
<div style="left:70px;top:563px;width:8px;height:1px;background-image:repeating-linear-gradient(90deg,#808080 0 1px,transparent 1px 2px)"></div>
<div style="left:59px;top:558px;width:11px;height:11px;background:#fff;border:1px solid #848484"></div>
<div style="left:62px;top:563px;width:5px;height:1px;background:#000"></div>
<svg style="left:77.5px;top:553.0px" width="20" height="20" viewBox="0 0 16 16"><rect x="4.5" y="1.5" width="7" height="13.5" fill="#c0c0c0" stroke="#000" stroke-width="1.1"/><path d="M1.5 4h3M1.5 7h3M1.5 10h3M1.5 13h3M11.5 4h3M11.5 8h3M11.5 12h3" fill="none" stroke="#000" stroke-width="1.1"/></svg>
<span class="tree" style="left:103.5px;top:553px">功能块</span>
<div style="left:88px;top:588px;width:14px;height:1px;background-image:repeating-linear-gradient(90deg,#808080 0 1px,transparent 1px 2px)"></div>
<svg style="left:101.5px;top:578.0px" width="20" height="20" viewBox="0 0 16 16"><rect x="4.5" y="2.5" width="7.5" height="11" fill="#e4e464" stroke="#000" stroke-width="1.1"/><path d="M1 5h3.5M1 8h3.5M1 11h3.5M12 5.5h3M12 10.5h3" fill="none" stroke="#000" stroke-width="1.1"/><path d="M7.2 5.5v5h2.6" fill="none" stroke="#000" stroke-width="1.3"/></svg>
<span class="tree" style="left:127.5px;top:578px">数据限制DINT</span>
<div style="left:88px;top:613px;width:14px;height:1px;background-image:repeating-linear-gradient(90deg,#808080 0 1px,transparent 1px 2px)"></div>
<svg style="left:101.5px;top:603.0px" width="20" height="20" viewBox="0 0 16 16"><rect x="4.5" y="2.5" width="7.5" height="11" fill="#e4e464" stroke="#000" stroke-width="1.1"/><path d="M1 5h3.5M1 8h3.5M1 11h3.5M12 5.5h3M12 10.5h3" fill="none" stroke="#000" stroke-width="1.1"/><path d="M7.2 5.5v5h2.6" fill="none" stroke="#000" stroke-width="1.3"/></svg>
<span class="tree" style="left:123.5px;top:602px;height:24px;line-height:22px;padding:0 3px 0 3px;background:#0078d7;color:#fff;border:1px dotted #f0b060">数值判断DINT</span>
<svg style="left:0;top:977px" width="372" height="28" viewBox="0 977 372 28" fill="none"><path d="M5 977h365v2.6h-309.5l-8.5 21h-37.5l-9.5 -21z" fill="#fff"/><path d="M5.2 979.6l9.4 20.9h37.6l8.4 -20.9h309" stroke="#000" stroke-width="1.25"/></svg>
<div style="left:5px;top:960px;width:1px;height:20px;background:#696969"></div>
<span style="left:18.5px;top:980px;font-size:14.6px;line-height:20px">工程</span>
<div style="left:0;top:1002px;width:383px;height:2px;background:#b4b4b4"></div>
<!-- SYMBOL TABLE -->
<div style="left:383px;top:203px;width:1536px;height:124px;border-left:2px solid #747474;border-top:2px solid #808080;border-bottom:2px solid #fff"></div>
<div style="left:385px;top:205px;width:1534px;height:25.6px;background:#f0f0f0;border-bottom:2px solid #808080"></div>
<div style="left:385px;top:205px;width:325px;height:24.4px;border-right:2px solid #808080;border-left:1px solid #fff;border-top:1px solid #fff"><span style="left:7px;top:3px;line-height:20px">名称</span></div>
<div style="left:710px;top:205px;width:239px;height:24.4px;border-right:2px solid #808080;border-left:1px solid #fff;border-top:1px solid #fff"><span style="left:8px;top:3px;line-height:20px">数据类型</span></div>
<div style="left:949px;top:205px;width:174px;height:24.4px;border-right:2px solid #808080;border-left:1px solid #fff;border-top:1px solid #fff"><span style="left:8px;top:3px;line-height:20px">AT</span></div>
<div style="left:1123px;top:205px;width:173px;height:24.4px;border-right:2px solid #808080;border-left:1px solid #fff;border-top:1px solid #fff"><span style="left:8px;top:3px;line-height:20px">初始值</span></div>
<div style="left:1296px;top:205px;width:130px;height:24.4px;border-right:2px solid #808080;border-left:1px solid #fff;border-top:1px solid #fff"><span style="left:8px;top:3px;line-height:20px">保留</span></div>
<div style="left:1426px;top:205px;width:439px;height:24.4px;border-right:2px solid #808080;border-left:1px solid #fff;border-top:1px solid #fff"><span style="left:8px;top:3px;line-height:20px">注释</span></div>
<div style="left:1865px;top:205px;width:60px;height:24.4px;border-right:2px solid #808080;border-left:1px solid #fff;border-top:1px solid #fff"><span style="left:8px;top:3px;line-height:20px"></span></div>
<div style="left:385px;top:230.6px;width:1534px;height:62.6px;background:#fff"></div>
<div style="left:385px;top:255px;width:1534px;height:1px;background:#ececec"></div>
<div style="left:385px;top:278px;width:1534px;height:1px;background:#ececec"></div>
<div style="left:711px;top:231px;width:1px;height:62px;background:#ececec"></div>
<div style="left:950px;top:231px;width:1px;height:62px;background:#ececec"></div>
<div style="left:1124px;top:231px;width:1px;height:62px;background:#ececec"></div>
<div style="left:1297px;top:231px;width:1px;height:62px;background:#ececec"></div>
<div style="left:1427px;top:231px;width:1px;height:62px;background:#ececec"></div>
<div style="left:1866px;top:231px;width:1px;height:62px;background:#ececec"></div>
<span style="left:390px;top:234px;line-height:20px">目标数据上限</span>
<span style="left:718px;top:234px;line-height:20px">DINT</span>
<span style="left:1132px;top:234px;line-height:20px">0</span>
<span style="left:390px;top:257px;line-height:20px">目标数据下限</span>
<span style="left:718px;top:257px;line-height:20px">DINT</span>
<span style="left:1132px;top:257px;line-height:20px">0</span>
<div style="left:385px;top:293px;width:1534px;height:29px;background:#f0f0f0"></div>
<div style="left:386.0px;top:293px;width:121px;height:30px;background:#f0f0f0;border-right:2px solid #696969;border-bottom:2px solid #696969;border-left:1px solid #fff;border-radius:0 0 3px 3px;z-index:2"><span style="left:0;width:118px;text-align:center;top:7px;line-height:20px">内部</span></div>
<div style="left:509.4px;top:293px;width:118.6px;height:28px;background:#f0f0f0;border-right:2px solid #707070;border-bottom:2px solid #707070;border-left:1px solid #fff;border-radius:0 0 2px 2px"><span style="left:0;width:116px;text-align:center;top:4.6px;line-height:20px">输入</span></div>
<div style="left:629.1px;top:293px;width:118.6px;height:28px;background:#f0f0f0;border-right:2px solid #707070;border-bottom:2px solid #707070;border-left:1px solid #fff;border-radius:0 0 2px 2px"><span style="left:0;width:116px;text-align:center;top:4.6px;line-height:20px">输出</span></div>
<div style="left:748.9px;top:293px;width:118.6px;height:28px;background:#f0f0f0;border-right:2px solid #707070;border-bottom:2px solid #707070;border-left:1px solid #fff;border-radius:0 0 2px 2px"><span style="left:0;width:116px;text-align:center;top:4.6px;line-height:20px">输入输出</span></div>
<div style="left:868.6px;top:293px;width:118.6px;height:28px;background:#f0f0f0;border-right:2px solid #707070;border-bottom:2px solid #707070;border-left:1px solid #fff;border-radius:0 0 2px 2px"><span style="left:0;width:116px;text-align:center;top:4.6px;line-height:20px">外部</span></div>
<!-- LADDER -->
<div style="left:382.5px;top:329.7px;width:1536.5px;height:650.3px;border-left:2.3px solid #6e6e6e;border-top:2.3px solid #606060;border-bottom:1px solid #fff;background:#fff"></div>
<div style="left:385px;top:332px;width:54.5px;height:625px;background:#f0f0f0"></div>
<div style="left:385px;top:332px;width:57.3px;height:417px;background:linear-gradient(90deg,#f0f0f0 54.4px,#f8f8f8 54.4px);border-top:1.5px solid #fff;border-bottom:1.7px solid #b4b4b4"></div>
<div style="left:385px;top:750px;width:57.3px;height:157px;background:linear-gradient(90deg,#f0f0f0 54.4px,#f8f8f8 54.4px);border-top:1.5px solid #fff;border-bottom:1.7px solid #b4b4b4"></div>
<div style="left:385px;top:908px;width:57.3px;height:53px;background:linear-gradient(90deg,#f0f0f0 54.4px,#f8f8f8 54.4px);border-top:1.5px solid #fff;border-bottom:1.7px solid #b4b4b4"></div>
<div style="left:440px;top:332px;width:135px;height:55.3px;background:repeating-linear-gradient(135deg,#fff 0 2.6px,#484848 2.6px 3.54px)"></div>
<div style="left:444.3px;top:332px;width:126.2px;height:51px;background:#fff"></div>
<div style="left:1897.3px;top:332px;width:22px;height:626px;background:#f0f0f0"></div>
<div style="left:1897.7px;top:353.5px;width:18.3px;height:21px;background:#cdcdcd"></div>
<div style="left:385px;top:958px;width:1534px;height:21px;background:#f0f0f0"></div>
<div style="left:406px;top:960px;width:21px;height:17px;background:#cdcdcd"></div>
<svg style="left:385px;top:332px" width="1534" height="648" viewBox="385 332 1534 648" fill="none" stroke="#505050" stroke-width="2" stroke-linejoin="miter"><path d="M1902.4 346l4.4 -5l4.4 5"/><path d="M1902.4 944.7l4.4 5l4.4 -5"/><path d="M397.5 963.5l-4.5 4.5l4.5 4.5"/><path d="M1883.5 963.5l4.5 4.5l-4.5 4.5"/></svg>
<svg style="left:0;top:0" width="1919" height="1012" viewBox="0 0 1919 1012" fill="none"><path d="M441.7 387.5V957" stroke="#c0c0c0" stroke-width="1.5"/><path d="M444.35 332V957M1337.3 332V956" stroke="#2e9436" stroke-width="1.3"/><path d="M444 357.5H499M516.5 357.5H1215.5M499 348.5V366M516.5 348.5V366M572 386V567.5M572 567.5H1215.5M1215.5 349H1329.5V539H1215.5ZM1215.5 384H1329.5M1329.5 357.5H1337M1336.6 351V363M1215.5 559H1329.5V749H1215.5ZM1215.5 594H1329.5M1329.5 567.5H1337M1336.6 561V573M1251.5 436.8H1294M1251.5 488.8H1294M1251.5 646.8H1294M1251.5 699.2H1294M444 778H499.5M517 778H578.5M499.5 769V787M517 769V787M499.5 787L517 769.5M578.5 769.2H692V906.5H578.5ZM578.5 804.2H692M692 778H705.5M705.5 769.2H819.5V906.5H705.5ZM705.5 804.2H819.5M819.5 778H882M882 769V787M899.5 769V787M899.5 778H1264M1280 778H1337M1336.6 772V784.5M613.5 856.8H656M741 856.8H783.5" stroke="#2b2b2b" stroke-width="1.35"/><circle cx="1272" cy="778.6" r="7.9" fill="#fff" stroke="#2b2b2b" stroke-width="1.3"/></svg>
<span class="" style="left:389.3px;top:329.4px;line-height:20px;font-size:14px;font-family:'Liberation Sans',sans-serif">0</span>
<span class="" style="left:428.1px;top:346.4px;line-height:20px;font-size:14px;font-family:'Liberation Sans',sans-serif">0</span>
<span class="" style="left:389.3px;top:749.4px;line-height:20px;font-size:14px;font-family:'Liberation Sans',sans-serif">1</span>
<span class="" style="left:428.1px;top:766.4px;line-height:20px;font-size:14px;font-family:'Liberation Sans',sans-serif">3</span>
<span class="" style="left:389.3px;top:907.2px;line-height:20px;font-size:14px;font-family:'Liberation Sans',sans-serif">2</span>
<span class="blue ctr" style="left:507.5px;top:329.7px;line-height:20px;font-family:'Liberation Serif',serif;font-size:16px;font-weight:bold;transform:translateX(-50%) scaleX(.69);">EN</span>
<span class="lad blue ctr" style="left:506.5px;top:366.4px;line-height:20px;">功能块的控制执行</span>
<span class="mono ctr" style="left:1272px;top:353.6px;line-height:20px;color:#111;font-size:15px;letter-spacing:0;">+L(401)</span>
<span class="mono ctr" style="left:1272px;top:563.8px;line-height:20px;color:#111;font-size:15px;letter-spacing:0;">-L(411)</span>
<span class="lad blue ctr" style="left:1272.5px;top:384.59999999999997px;line-height:20px;">目标数据</span>
<span class="lad blue ctr" style="left:1272.5px;top:437.09999999999997px;line-height:20px;">公差</span>
<span class="lad blue ctr" style="left:1272.5px;top:489.59999999999997px;line-height:20px;">目标数据上限</span>
<span class="lad blue ctr" style="left:1272.5px;top:594.8000000000001px;line-height:20px;">目标数据</span>
<span class="lad blue ctr" style="left:1272.5px;top:647.3000000000001px;line-height:20px;">公差</span>
<span class="lad blue ctr" style="left:1272.5px;top:699.8000000000001px;line-height:20px;">目标数据下限</span>
<span class="lad" style="left:1345px;top:358.3px;line-height:20px;color:#111;">不带进位有符号双二进制加</span>
<span class="lad" style="left:1345px;top:384.3px;line-height:20px;color:#111;">第一个被加数字</span>
<span class="lad" style="left:1345px;top:436.8px;line-height:20px;color:#111;">第一个加数字</span>
<span class="lad" style="left:1345px;top:489.3px;line-height:20px;color:#111;">第一个结果字</span>
<span class="lad" style="left:1345px;top:568.4000000000001px;line-height:20px;color:#111;">不带进位有符号双二进制减</span>
<span class="lad" style="left:1345px;top:594.5px;line-height:20px;color:#111;">第一个被减数</span>
<span class="lad" style="left:1345px;top:647.0px;line-height:20px;color:#111;">第一个减数字</span>
<span class="lad" style="left:1345px;top:699.5px;line-height:20px;color:#111;">第一个结果字</span>
<span class="lad blue" style="left:480.7px;top:751.7px;line-height:20px;">强制</span>
<span class="blue" style="left:510.6px;top:749.6px;line-height:20px;font-family:'Liberation Serif',serif;font-size:16px;font-weight:bold;transform-origin:0 50%;transform:scaleX(.67)">OFF</span>
<span class="mono ctr" style="left:634.5px;top:774.6px;line-height:20px;color:#111;font-size:13.6px;letter-spacing:0.55px;">&lt;=SL(318)</span>
<span class="mono ctr" style="left:762px;top:774.6px;line-height:20px;color:#111;font-size:13.6px;letter-spacing:0.55px;">&gt;=SL(328)</span>
<span class="lad blue ctr" style="left:635px;top:804.8000000000001px;line-height:20px;">数据</span>
<span class="lad blue ctr" style="left:762.5px;top:804.8000000000001px;line-height:20px;">数据</span>
<span class="lad blue ctr" style="left:635px;top:857.3000000000001px;line-height:20px;">目标数据上限</span>
<span class="lad blue ctr" style="left:762.5px;top:857.3000000000001px;line-height:20px;">目标数据下限</span>
<span class="blue ctr" style="left:890px;top:749.5px;line-height:20px;font-family:'Liberation Serif',serif;font-size:16px;font-weight:bold;transform:translateX(-50%) scaleX(.69);">EN</span>
<span class="lad blue ctr" style="left:889.5px;top:786.6px;line-height:20px;">功能块的控制执行</span>
<span class="lad blue ctr" style="left:1272px;top:752.4000000000001px;line-height:20px;">对比成功</span>
<!-- BOTTOM INFO BAR -->
<div style="left:383px;top:984px;width:15px;height:15px;background:#f0f0f0;border:1px solid #696969;border-top-color:#fff;border-left-color:#fff;box-shadow:inset -1px -1px 0 #a0a0a0"></div>
<svg style="left:386px;top:987px" width="9" height="9" viewBox="0 0 9 9"><path d="M1 1l7 7M8 1l-7 7" stroke="#000" stroke-width="1.9"/></svg>
<div style="left:400px;top:984px;width:15px;height:15px;background:#f0f0f0;border:1px solid #696969;border-top-color:#fff;border-left-color:#fff;box-shadow:inset -1px -1px 0 #a0a0a0"></div>
<svg style="left:404px;top:987px" width="6" height="9" viewBox="0 0 6 9"><path d="M5 0.5v8l-4.5 -4z" fill="#000"/></svg>
<div style="left:417px;top:983px;width:63px;height:22px;border:1px solid #a0a0a0;border-right-color:#fff;border-bottom-color:#fff"></div>
<span class="ctr" style="left:448.5px;top:986px;line-height:20px">输入</span>
<span style="left:487px;top:985px;line-height:20px">名称:</span>
<div style="left:526px;top:983px;width:473px;height:22px;background:#ffff00;border:1px solid #696969;border-right-color:#fff;border-bottom-color:#fff"><span style="left:2px;top:2px;line-height:20px;font-size:15.5px">EN</span></div>
<span style="left:1007px;top:985px;line-height:20px">地址值:</span>
<div style="left:1061px;top:983px;width:89px;height:22px;border:1px solid #696969;border-right-color:#fff;border-bottom-color:#fff"></div>
<span style="left:1157px;top:985px;line-height:20px">注释:</span>
<div style="left:1196px;top:983px;width:725px;height:22px;background:#ffff00;border:1px solid #696969;border-bottom-color:#fff"><span style="left:2px;top:2px;line-height:20px">BOOL: 功能块的控制执行</span></div>
<div style="left:0;top:1005px;width:1919px;height:8px;background:#f0f0f0;overflow:hidden">
<span style="left:3px;top:4px;line-height:20px;font-size:14.5px">需要帮助，请按F1</span>
<div style="left:875px;top:2px;width:108px;height:22px;border:1px solid #a0a0a0;border-right-color:#fff;overflow:hidden"><span style="left:4px;top:1px;line-height:20px;font-size:14.5px"></span></div>
<div style="left:988px;top:2px;width:318px;height:22px;border:1px solid #a0a0a0;border-right-color:#fff;overflow:hidden"><span style="left:4px;top:1px;line-height:20px;font-size:14.5px">　ST4(网络:0,节点:0) - 离线</span></div>
<div style="left:1311px;top:2px;width:68px;height:22px;border:1px solid #a0a0a0;border-right-color:#fff;overflow:hidden"><span style="left:4px;top:1px;line-height:20px;font-size:14.5px"></span></div>
<div style="left:1384px;top:2px;width:68px;height:22px;border:1px solid #a0a0a0;border-right-color:#fff;overflow:hidden"><span style="left:4px;top:1px;line-height:20px;font-size:14.5px"></span></div>
<div style="left:1456px;top:2px;width:161px;height:22px;border:1px solid #a0a0a0;border-right-color:#fff;overflow:hidden"><span style="left:4px;top:1px;line-height:20px;font-size:14.5px">条 0 (0, 0)  - 100%</span></div>
<div style="left:1622px;top:2px;width:133px;height:22px;border:1px solid #a0a0a0;border-right-color:#fff;overflow:hidden"><span style="left:4px;top:1px;line-height:20px;font-size:14.5px"></span></div>
<div style="left:1759px;top:2px;width:72px;height:22px;border:1px solid #a0a0a0;border-right-color:#fff;overflow:hidden"><span style="left:4px;top:1px;line-height:20px;font-size:14.5px">智能</span></div>
<div style="left:1835px;top:2px;width:35px;height:22px;border:1px solid #a0a0a0;border-right-color:#fff;overflow:hidden"><span style="left:4px;top:1px;line-height:20px;font-size:14.5px"></span></div>
<div style="left:1875px;top:2px;width:50px;height:22px;border:1px solid #a0a0a0;border-right-color:#fff;overflow:hidden"><span style="left:4px;top:1px;line-height:20px;font-size:14.5px"></span></div>
</div>
</body>
</html>
